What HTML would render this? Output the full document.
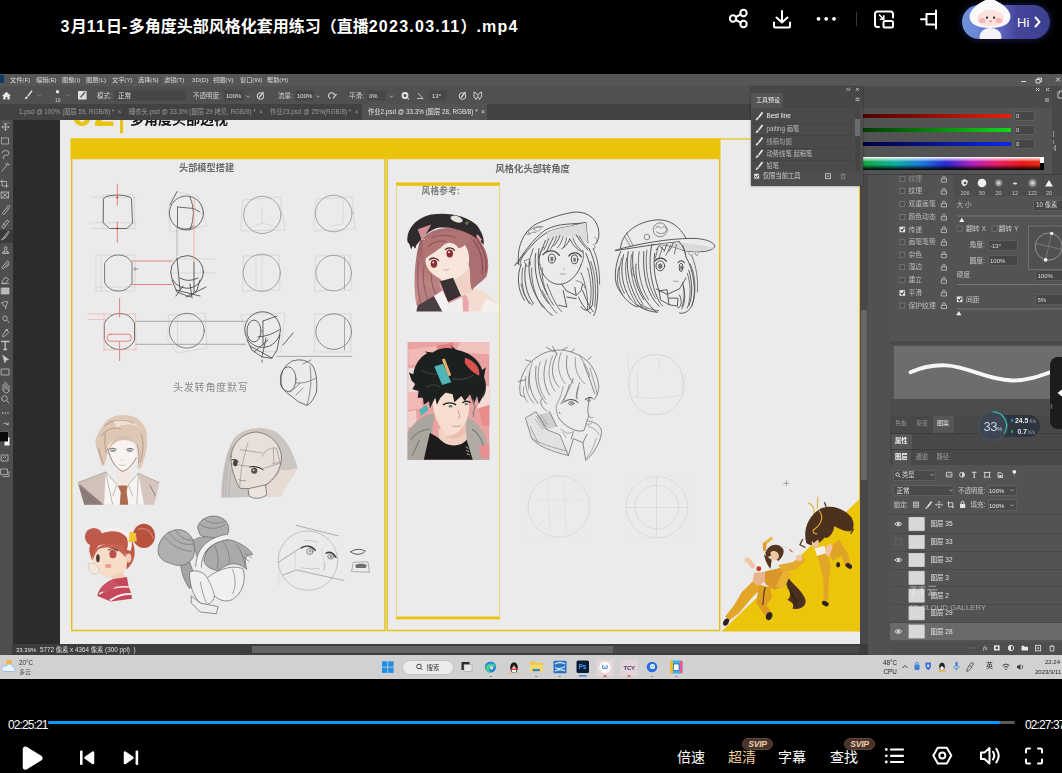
<!DOCTYPE html>
<html lang="zh-CN">
<head>
<meta charset="utf-8">
<title>3月11日-多角度头部风格化套用练习（直播2023.03.11）.mp4</title>
<style>
*{box-sizing:border-box;margin:0;padding:0}
html,body{width:1062px;height:773px;overflow:hidden;background:#000}
body{font-family:"Liberation Sans","Noto Sans CJK SC",sans-serif;color:#fff;position:relative}
.abs{position:absolute}
#title{left:60.500px;top:14.500px;font-size:16px;font-weight:bold;line-height:24px;white-space:nowrap;color:#fff;letter-spacing:0}
#video{left:0;top:73px;width:1062px;height:606px;overflow:hidden;background:#535353}
.t{position:absolute;white-space:nowrap;line-height:1}
/* bottom controls */
.ctl{position:absolute;font-size:14px;line-height:16px;color:#fff;white-space:nowrap}
.svip{position:absolute;height:12px;width:31px;border-radius:6px;background:#4a342a;color:#ecd0ae;font-size:8.500px;line-height:12px;font-weight:bold;font-style:italic;text-align:center;letter-spacing:-0.2px;border:1px solid #5d463a;line-height:10px}
#title .l{letter-spacing:1.25px}

#video{left:0;top:0;width:1062px;height:773px;background:none;filter:blur(.45px)}
#vbg{left:0;top:74px;width:1062px;height:605px;background:#535353}
.m{position:absolute;top:75.800px;font-size:6.200px;line-height:8px;color:#dcdcdc;white-space:nowrap}
.o{position:absolute;font-size:6.500px;line-height:8px;color:#d0d0d0;white-space:nowrap}
.box{position:absolute;background:#464646;border:1px solid #4a4a4a;border-radius:1px}
.tab{position:absolute;top:108px;font-size:6.300px;line-height:8px;color:#9a9a9a;white-space:nowrap}
.p{position:absolute;font-size:6.500px;line-height:8px;color:#cfcfcf;white-space:nowrap}
</style>
</head>
<body>
<!-- ===== top bar ===== -->
<div id="title" class="abs"><span class="l">3</span>月<span class="l">11</span>日<span class="l">-</span>多角度头部风格化套用练习（直播<span class="l">2023.03.11</span>）<span class="l">.mp4</span></div>
<svg class="abs" style="left:720px;top:0" width="342" height="50" viewBox="720 0 342 50" fill="none" stroke="#fff" stroke-width="2" stroke-linecap="round" stroke-linejoin="round">
  <!-- share -->
  <circle cx="733" cy="18.5" r="3.2"/><circle cx="743.5" cy="13" r="3.2"/><circle cx="743.5" cy="24" r="3.2"/>
  <path d="M735.8 17l5-2.6M735.8 20l5 2.6"/>
  <!-- download -->
  <path d="M782 11v11M776.5 17.5l5.5 5 5.500-5M774 22.500v3.500q0 1.500 1.500 1.500h13q1.500 0 1.500-1.500v-3.500"/>
  <!-- dots -->
  <g fill="#fff" stroke="none"><circle cx="818.500" cy="18.800" r="1.900"/><circle cx="826.200" cy="18.800" r="1.900"/><circle cx="834" cy="18.800" r="1.900"/></g>
  <path d="M856.500 12v14" stroke="#3a3a3a" stroke-width="1"/>
  <!-- pip -->
  <path d="M879 27h-1.500q-2.500 0-2.500-2.500v-10.500q0-2.500 2.500-2.500h13q2.500 0 2.500 2.500v3.500"/>
  <rect x="883.500" y="21" width="9.500" height="6.500" rx="1.500"/>
  <path d="M879.500 15l4 4M883.800 15.800v3.400h-3.400" stroke-width="1.600"/>
  <!-- pin -->
  <path d="M936 10.500v18M936 14h-9.500v10.500h9.500M926.500 19.300h-5.500"/>
</svg>
<!-- Hi pill -->
<div class="abs" style="left:962px;top:5px;width:88px;height:34px;border-radius:17px;background:linear-gradient(90deg,#6f93db 0%,#6677cf 35%,#45459a 62%,#3c3f8f 100%);box-shadow:0 0 6px 1px rgba(40,50,120,.55)"></div>
<svg class="abs" style="left:962px;top:0" width="60" height="40" viewBox="962 0 60 40">
  <defs><clipPath id="pillclip"><rect x="962" y="-10" width="88" height="49" rx="17"/></clipPath></defs>
  <g clip-path="url(#pillclip)">
  <ellipse cx="990.500" cy="36.500" rx="11" ry="8.500" fill="#f4f4f8"/>
  <path d="M990 -3c2 2.500 8 4 13 8c5 4 7.500 8 7.500 11.500c0 8-9 11.500-20.500 11.500s-20.500-3.500-20.500-11.500c0-3.500 2.500-7.500 7.500-11.500c5-4 11-5.500 13-8z" fill="#fbfbfd"/>
  <ellipse cx="990.500" cy="18.300" rx="13.500" ry="8.300" fill="#fde3df"/>
  <ellipse cx="982" cy="20.500" rx="3.500" ry="2.600" fill="#f9b4b4"/><ellipse cx="999" cy="20.500" rx="3.500" ry="2.600" fill="#f9b4b4"/>
  <circle cx="987" cy="17.700" r="1.100" fill="#2a1a1a"/><circle cx="994" cy="17.700" r="1.100" fill="#2a1a1a"/>
  <path d="M989.300 21q1.200 1.300 2.400 0" stroke="#c0392b" stroke-width=".8" fill="none"/>
  </g>
</svg>
<div class="t" style="left:1017px;top:16px;font-size:13px;color:#fff">Hi</div>
<svg class="abs" style="left:1033px;top:16px" width="10" height="12" viewBox="0 0 10 12" fill="none" stroke="#fff" stroke-width="1.900" stroke-linecap="round" stroke-linejoin="round"><path d="M2.500 1.500l4 4.500-4 4.500"/></svg>

<!-- ===== video frame ===== -->
<div id="video" class="abs">

<div id="vbg" class="abs"></div>
<!-- menu bar -->
<div class="abs" style="left:0;top:74px;width:1062px;height:12px;background:#565656"></div>
<div class="abs" style="left:0;top:75.300px;width:3.500px;height:7.700px;background:#0d3b66"></div>
<div class="m" style="left:10px">文件(F)</div><div class="m" style="left:36px">编辑(E)</div><div class="m" style="left:62px">图像(I)</div><div class="m" style="left:86px">图层(L)</div><div class="m" style="left:112px">文字(Y)</div><div class="m" style="left:138px">选择(S)</div><div class="m" style="left:164px">滤镜(T)</div><div class="m" style="left:192px">3D(D)</div><div class="m" style="left:213px">视图(V)</div><div class="m" style="left:240px">窗口(W)</div><div class="m" style="left:267px">帮助(H)</div>
<svg class="abs" style="left:1015px;top:74px" width="47" height="12" viewBox="1015 74 47 12" fill="none" stroke="#d8d8d8" stroke-width="1"><path d="M1021 81.500h5M1036 79.500h4v3.500h-4zM1037.500 79.500v-1.500h4v3.500h-1.500M1056 77.500l4 4M1060 77.500l-4 4"/></svg>
<!-- options bar -->
<div class="abs" style="left:0;top:86px;width:1062px;height:18px;background:#505050"></div>
<svg class="abs" style="left:0;top:86px" width="500" height="18" viewBox="0 86 500 18" fill="#e6e6e6" stroke="none">
  <path d="M2 96l4.500-4.300 4.500 4.300h-1.300v3.500h-2.300v-2.500h-1.800v2.500h-2.300v-3.500z"/>
  <path d="M31.500 90.200l-4 5.200 1 1 4-5.200zM27 96.200q-1.800.4-2.200 3 2.600-.2 3.200-2z"/>
  <path d="M37.500 94.500l1.800 1.800 1.800-1.800" fill="none" stroke="#888" stroke-width=".9"/>
  <circle cx="57.500" cy="91.700" r="1.700"/>
  <path d="M66.500 94.500l1.800 1.800 1.800-1.800" fill="none" stroke="#888" stroke-width=".9"/>
  <rect x="78" y="91" width="8.500" height="8.500" fill="#e0e0e0"/><path d="M85 92l-4.500 5.500" stroke="#505050" stroke-width="1.200"/>
  <path d="M180.500 95.500l1.800 1.800 1.800-1.800M246.500 95.500l1.800 1.800 1.800-1.800M316.500 95.500l1.800 1.800 1.800-1.800M389.500 95.500l1.800 1.800 1.800-1.800" fill="none" stroke="#aaa" stroke-width=".9"/>
  <circle cx="260.500" cy="96" r="3.300" fill="none" stroke="#ddd" stroke-width="1"/><path d="M259 97.500l4.500-5.500" stroke="#ddd" stroke-width="1.200"/>
  <path d="M330.500 98.500a3 3 0 1 1 4-3.500M333 98.300l3.500-4.300" fill="none" stroke="#ddd" stroke-width="1.100"/>
  <circle cx="405" cy="95.500" r="2.500" fill="none" stroke="#e6e6e6" stroke-width="1.800"/><circle cx="408.300" cy="98.800" r=".8"/>
  <path d="M417 98.500h6l-5-5.500" fill="none" stroke="#ccc" stroke-width=".9"/>
  <circle cx="462.500" cy="96" r="3.300" fill="none" stroke="#ddd" stroke-width="1"/><path d="M461 97.500l4.500-5.500" stroke="#ddd" stroke-width="1.200"/>
  <path d="M474 92q2 0 3.800 3.500 1.800-3.500 3.800-3.500v5q-1.300.2-2 2.500l-1.800-3-1.800 3q-.7-2.300-2-2.500z" fill="none" stroke="#ddd" stroke-width=".9"/>
</svg>
<div class="o" style="left:55px;top:97px;font-size:5px;line-height:6px;color:#ccc">10</div>
<div class="o" style="left:97px;top:92px">模式:</div>
<div class="box" style="left:114px;top:90px;width:72px;height:11px"></div><div class="o" style="left:118px;top:92px;color:#e2e2e2">正常</div>
<div class="o" style="left:193px;top:92px">不透明度:</div>
<div class="box" style="left:224px;top:90px;width:20px;height:11px"></div><div class="o" style="left:226px;top:92px;font-size:6px;color:#e2e2e2">100%</div>
<div class="o" style="left:278px;top:92px">流量:</div>
<div class="box" style="left:295px;top:90px;width:19px;height:11px"></div><div class="o" style="left:297px;top:92px;font-size:6px;color:#e2e2e2">100%</div>
<div class="o" style="left:349px;top:92px">平滑:</div>
<div class="box" style="left:367px;top:90px;width:19px;height:11px"></div><div class="o" style="left:369px;top:92px;font-size:6px;color:#e2e2e2">0%</div>
<div class="box" style="left:429px;top:90px;width:18px;height:11px"></div><div class="o" style="left:432px;top:92px;font-size:6px;color:#e2e2e2">13°</div>
<!-- tab bar -->
<div class="abs" style="left:0;top:104px;width:868px;height:16px;background:#424242"></div>
<div class="abs" style="left:362px;top:104px;width:125px;height:16px;background:#535353"></div>
<div class="tab" style="left:19px">1.psd @ 100% (图层 59, RGB/8) * &nbsp;×</div>
<div class="tab" style="left:129px">睡衣头.psd @ 33.3% (图层 29 拷贝, RGB/8) * &nbsp;×</div>
<div class="tab" style="left:270px">作业23.psd @ 25%(RGB/8) * &nbsp;×</div>
<div class="tab" style="left:368px;color:#e6e6e6">作业2.psd @ 33.3% (图层 28, RGB/8) * &nbsp;×</div>
<!-- canvas area -->
<div class="abs" style="left:12px;top:120px;width:848px;height:524px;background:#2c2c2c"></div>
<svg class="abs" style="left:60px;top:120px" width="800" height="524" viewBox="60 120 800 524" font-family="'Liberation Sans','Noto Sans CJK SC',sans-serif">
<defs>
  <linearGradient id="hairg1" x1="0" y1="0" x2="0" y2="1"><stop offset="0" stop-color="#9a5e61"/><stop offset="1" stop-color="#cd9893"/></linearGradient>
  <filter id="soft" x="-5%" y="-5%" width="110%" height="110%"><feGaussianBlur stdDeviation="0.35"/></filter>
</defs>
<rect x="60" y="120" width="800" height="524" fill="#ebebeb"/>
<!-- header -->
<text x="71.500" y="125.600" font-size="38" font-weight="bold" fill="#ecc30c" letter-spacing="1">02</text>
<rect x="120" y="118" width="3.100" height="15.300" fill="#ecc30c"/>
<text x="130" y="124.300" font-size="14" font-weight="bold" fill="#111">多角度头部透视</text>
<!-- yellow banner + frames -->
<rect x="70.500" y="138.200" width="650" height="21" fill="#ebc30a"/>
<path d="M720 139h31" stroke="#e8c20e" stroke-width="1.200"/>
<g fill="none" stroke="#e6bf14" stroke-width="1.400">
  <path d="M71.700 159v471.500h313.300V159"/>
  <path d="M387.200 159v471.500h332.500V159"/>
</g>
<!-- reference box -->
<rect x="396" y="182.500" width="104" height="3.300" fill="#ebc30a"/>
<rect x="396" y="616.500" width="104" height="2.800" fill="#ebc30a"/>
<path d="M396.500 185v432M499.500 185v432" stroke="#e9d98a" stroke-width="1" fill="none"/>
<!-- bottom right triangle -->
<path d="M860 498.500V631.500H721.500z" fill="#ecc40a"/>
<path d="M859.500 120v512" stroke="#e8c62a" stroke-width="1"/>
<!-- labels -->
<text x="179" y="171.200" font-size="9.200" font-weight="bold" fill="#6b6b6b">头部模型搭建</text>
<text x="495.500" y="171.800" font-size="9.300" font-weight="bold" fill="#666">风格化头部转角度</text>
<text x="421.500" y="193.900" font-size="8.600" font-weight="bold" fill="#7a7a7a" letter-spacing=".3">风格参考:</text>
<text x="173" y="391.300" font-size="10" fill="#8a8a8a" letter-spacing=".8">头发转角度默写</text>
<!-- ===== head models ===== -->
<g fill="none" stroke-linecap="round" stroke-linejoin="round">
 <g stroke="#cdcdcd" stroke-width=".6">
  <path d="M92 197.300H136M90 222.800H136M92 228.500H134M103 195V229M134 195L135 229M103 195H134"/>
  <path d="M177 192L198 196 207 226 170 232 168 205Z"/>
  <path d="M96.300 255H135V291H96.300ZM101 255V291M96 287H135"/>
  <path d="M172 259H215M172 273H215"/>
  <path d="M243 200L280 197 285 230 241 231ZM316 199L352 197 355 229 314 231Z"/>
  <path d="M244 256L279 255 280 290 243 291ZM316 256L350 255 352 290 315 291ZM262 255V291M256 258V288"/>
  <path d="M169 315L205 313 207 348 177 353 168 340ZM177.500 318V348"/>
  <path d="M241 315L285 313 281 352 252 351ZM315 314H351V352H315Z"/>
  <path d="M262 208V223L250 228M262 223L277 227M343 200V224L330 226"/>
 </g>
 <g stroke="#6a6a6a" stroke-width=".85">
  <path d="M103.500 199Q104 196.500 110 195.700 117.500 194.300 125 195.700 131 196.800 131.500 199L132.500 223 127 228.500H109.500L103.500 223Z" stroke="#555"/>
  <circle cx="186.400" cy="213" r="17" stroke="#555"/>
  <path d="M177.500 207V227M177.500 207L194 208.500 200 212M177.500 227Q186 232 194 226M190 197Q197 213 190 230M177 191.500L170 205" stroke="#555"/>
  <path d="M177 225V256" stroke="#999" stroke-width=".6"/>
  <path d="M104.800 263A15.500 15.500 0 0 1 132 263V283A15.500 15.500 0 0 1 104.800 283Z" stroke="#666"/>
  <circle cx="187" cy="272" r="16.300" stroke="#444"/>
  <path d="M172 280L177 292 190 297 197 290 200 280M177 258L180 290M194 262V292M176 290L200 296M186 297L206 287M180 278Q188 283 198 278M183 286L176 296M190 284L192 298" stroke="#444"/>
  <circle cx="262.300" cy="214.900" r="18.600" stroke="#979797"/>
  <circle cx="333.700" cy="213.500" r="18.300" stroke="#979797"/>
  <circle cx="261.800" cy="272.800" r="18.600" stroke="#979797"/>
  <circle cx="333.700" cy="273.100" r="17.800" stroke="#979797"/>
  <path d="M344.500 257V289" stroke="#999" stroke-width=".7"/>
  <path d="M104.500 323A16.500 16.500 0 0 1 134.500 323V340A16.500 16.500 0 0 1 104.500 340Z" stroke="#555"/>
  <path d="M135.900 321.300H245.500M135.900 344.300H245.500M276.600 356.400H351.800" stroke="#8c8c8c" stroke-width=".7"/>
  <circle cx="186.800" cy="330.700" r="17.400" stroke="#707070"/>
  <circle cx="262.600" cy="329.600" r="17.800" stroke="#4a4a4a"/>
  <path d="M247 340L252 350 262 357 271.900 358.300 277 350 280 335M258 337Q270 336 279 330M263 321V345M263 321L277 316M262 357L266 338M250 346L272 358M254 352L268 340M283 345L293 333M262 360V362" stroke="#4a4a4a"/>
  <ellipse cx="254" cy="331" rx="7" ry="11" stroke="#4a4a4a"/>
  <circle cx="333.700" cy="331.600" r="17.800" stroke="#7a7a7a"/>
  <path d="M344.500 318V350" stroke="#888" stroke-width=".7"/>
  <path d="M281 385Q279 368 292 361 305 357 313 366 318 376 316.500 392 313 402 307 405.500 298 403 290 395 282 390 281 385Z" stroke="#555"/>
  <ellipse cx="288.200" cy="379.200" rx="7.800" ry="12.400" stroke="#555"/>
  <path d="M296 383Q306 384 316 378M310 366Q313 385 307 405M290 392Q298 386 300 383M303 364L311 360M296 395L303 388" stroke="#666" stroke-width=".7"/>
 </g>
 <g stroke="#e2564a" stroke-width=".7">
  <path d="M117.300 184.300V205M117.300 222V242.500M132 261H172M132 284.500H172"/><path d="M194 200V262" stroke="#ee938a" stroke-width=".6"/>
  <path d="M119.600 298.500V317M119.600 342V360.600"/>
  <rect x="107.200" y="334.200" width="24" height="7" rx="3"/>
  <path d="M88 314H134M88 319.500H105M104 349.700H136M104 314V350M135.500 314L136 350" stroke="#f0a8a0" stroke-width=".6"/>
 </g>
 <circle cx="117.300" cy="197.500" r=".9" fill="#b02a20" stroke="none"/><circle cx="117.300" cy="228.500" r=".9" fill="#b02a20" stroke="none"/>
 <path d="M134 269h4M135.500 267.500l-1.500 1.500 1.500 1.500" stroke="#666" stroke-width=".6"/>
</g>
<!-- ===== portrait 1 (girl with cap) ===== -->
<g transform="translate(395,180) scale(0.18123)">
 <path d="M70 725L100 680 200 640 330 660 560 690 575 725Z" fill="#f1efee"/>
 <path d="M400 600C460 585 540 640 560 690L520 725 380 725Z" fill="#f4ddd0"/>
 <path d="M500 660C540 660 570 690 575 725L470 725Z" fill="#f3f1f0"/>
 <path d="M140 330C105 430 100 600 118 692L200 690C250 650 275 600 262 560L180 470 175 330Z" fill="url(#hairg1)"/>
 <path d="M330 520L410 480 428 612 372 642 320 548Z" fill="#f1d3c5"/>
 <path d="M145 330C200 260 320 240 430 300 508 360 528 450 506 530 480 565 450 575 425 610 408 560 420 520 410 480L330 300Z" fill="#ab6f71"/>
 <path d="M430 330C470 380 490 450 480 520M455 330C495 390 510 450 500 510" stroke="#8a4f55" stroke-width="7" fill="none"/>
 <path d="M170 425C185 350 262 312 338 318 405 345 425 430 396 498 358 548 300 558 252 546 196 518 160 480 170 425Z" fill="#f8e6da"/>
 <path d="M150 340C220 280 330 270 425 300 410 335 390 368 352 378 332 346 300 336 272 356 242 386 202 406 160 440Z" fill="#b27576"/>
 <path d="M200 320C240 300 300 300 340 320M180 370C210 340 250 330 280 340" stroke="#8f5559" stroke-width="6" fill="none"/>
 <path d="M120 690L150 560 200 600 250 560 262 640 200 700Z" fill="#b98083"/>
 <path d="M130 450C120 520 125 600 140 680M160 470C150 540 160 610 185 670M200 520C200 580 215 620 240 640" stroke="#96595e" stroke-width="6" fill="none"/>
 <ellipse cx="215" cy="462" rx="18" ry="22" fill="#8c2e34"/><ellipse cx="302" cy="405" rx="18" ry="22" fill="#8c2e34"/>
 <circle cx="211" cy="455" r="5" fill="#fff"/><circle cx="298" cy="398" r="5" fill="#fff"/>
 <path d="M188 442C203 425 230 427 242 446M276 386C291 369 319 371 330 390" stroke="#4a2a2c" stroke-width="7" fill="none"/>
 <path d="M268 492C278 500 290 498 298 490" stroke="#c98a80" stroke-width="4" fill="none"/>
 <path d="M70 345C58 280 110 210 200 190 300 175 400 200 452 250 482 290 494 330 489 357 440 300 330 250 230 265 170 290 140 330 110 372Z" fill="#2f2a2d"/>
 <path d="M78 340L90 372 100 345 112 375" stroke="#2f2a2d" stroke-width="8" fill="none"/>
 <path d="M125 272L200 246 150 336Z" fill="#cf8f95"/>
 <path d="M455 300L480 330 470 340 448 312Z" fill="#e6a4aa"/>
 <ellipse cx="340" cy="216" rx="35" ry="17" fill="#e8e2da" transform="rotate(18 340 216)"/>
 <circle cx="396" cy="238" r="9" fill="#3c8a5a"/><circle cx="404" cy="232" r="5" fill="#c8382c"/>
 <path d="M245 560L320 540 365 640 290 676Z" fill="#3a3134"/>
 <path d="M245 565L290 680 372 640" stroke="#e79aa0" stroke-width="9" fill="none"/>
 <path d="M125 692L215 640 262 725 118 725Z" fill="#4a4044"/>
 <path d="M215 640L262 610 300 690 262 725Z" fill="#f4f2f1"/>
 <path d="M372 640C400 620 410 660 405 725L375 725Z" fill="#e9a7ab"/>
</g>
<!-- ===== portrait 2 (boy) ===== -->
<g transform="translate(395,335) scale(0.17461)">
 <rect x="72" y="40" width="468" height="675" fill="#e9a2a1"/>
 <path d="M75 85L235 65 240 150 78 175Z" fill="#f0b9b5"/><path d="M370 42L540 42 540 110 350 100Z" fill="#f2c2be"/>
 <path d="M500 300L540 290 540 440 470 420Z" fill="#f3dcd8"/><path d="M75 190L130 185 135 380 75 385Z" fill="#ead8d4"/>
 <path d="M75 330L150 320 155 420 75 430Z" fill="#f1bab6"/><path d="M480 420L540 400 540 520 500 520Z" fill="#e88c8c"/>
 <path d="M240 60L330 45 335 75 245 90Z" fill="#e07f80"/><path d="M75 440L120 430 125 520 75 530Z" fill="#f4cfca"/>
 <path d="M72 560C110 490 180 445 228 452L210 560 165 715 72 715Z" fill="#aaa59d"/>
 <path d="M410 470C480 500 540 580 540 715L440 715 400 600Z" fill="#b0aba3"/>
 <path d="M90 600C120 560 160 540 200 540M440 540C480 560 510 620 520 690M100 690L140 600" stroke="#7d7871" stroke-width="6" fill="none"/>
 <path d="M250 540L400 480 412 620 300 642 250 600Z" fill="#f2d1c3"/>
 <path d="M215 370C230 340 300 320 400 340 437 380 430 450 400 510 370 560 330 586 295 575 250 530 215 450 215 370Z" fill="#f7ddd0"/>
 <path d="M290 575C330 585 372 556 400 510L405 560C370 600 320 610 290 575Z" fill="#e9bfae"/>
 <path d="M165 715L200 560 250 590C300 650 380 640 410 600L445 715Z" fill="#1d1b1c"/>
 <path d="M95 260L80 215 105 225C110 170 150 120 185 105L170 95 215 100C250 75 300 70 330 78L320 60 350 85C420 95 480 140 500 200L520 185 510 240C530 290 520 340 500 365L515 330 480 395 470 350 450 400 430 340 400 380 380 350 340 385 330 340 290 330 260 360 240 400 230 360 200 420 195 380 165 400 160 360 130 360 135 320 100 310 115 280Z" fill="#1c2120"/>
 <path d="M150 200C200 230 260 230 300 215M330 250C380 260 420 250 450 230M180 300C200 280 240 280 260 300" stroke="#3c4644" stroke-width="6" fill="none"/>
 <path d="M225 180L275 165 322 270 270 286Z" fill="#4fb5b8"/><path d="M268 140L285 135 322 230 306 236Z" fill="#e8b070"/>
 <path d="M138 430L180 400 192 430 150 462Z" fill="#4fb5b8"/>
 <path d="M400 130C440 140 492 180 482 232 450 220 420 190 400 160Z" fill="#d9534f"/>
 <path d="M275 400C295 385 330 385 350 400M385 388C400 378 420 378 432 388" stroke="#1e1e1e" stroke-width="8" fill="none"/>
 <ellipse cx="318" cy="408" rx="12" ry="7" fill="#5f7f78"/><ellipse cx="408" cy="396" rx="10" ry="6" fill="#5f7f78"/>
 <path d="M360 430L372 470 358 478M330 520C345 528 365 526 378 518" stroke="#c49a8c" stroke-width="5" fill="none"/>
 <path d="M445 370L458 410 446 450M452 440L448 470" stroke="#8a8580" stroke-width="7" fill="none"/>
 <path d="M480 640L540 620 540 700 500 712Z" fill="#e98f8f"/>
 <path d="M405 640L420 650M408 660L424 668M412 680L428 686" stroke="#d8d0c0" stroke-width="5"/>
</g>
<!-- ===== man with tie ===== -->
<g transform="translate(70,405) scale(0.14235)">
 <path d="M55 545L250 470 300 700 100 700Z" fill="#d0c1b9"/><path d="M480 480L628 545 592 700 470 700Z" fill="#d5c7bf"/>
 <path d="M58 555L235 700 100 700Z" fill="#8d7d79"/>
 <path d="M250 480L330 560 410 560 480 480 520 700 240 700Z" fill="#f6f5f4"/>
 <path d="M330 430L420 430 425 530 370 570 325 530Z" fill="#f1e6e0"/>
 <path d="M335 565L405 565 398 612 410 700 350 700 356 612Z" fill="#b06a50"/>
 <path d="M180 280C170 230 210 180 240 130 280 70 380 55 450 85 520 115 545 180 540 240 548 300 522 380 500 442 480 456 468 440 475 420 490 360 480 300 450 260 400 230 350 200 320 230 290 250 270 290 262 340 255 380 250 420 225 432 215 400 200 340 180 280Z" fill="#dec7b5"/>
 <path d="M300 110C360 80 440 100 490 160 440 130 380 130 330 160Z" fill="#eddfd3"/>
 <path d="M265 300C290 240 340 220 400 240 452 270 472 320 466 370 440 420 400 460 370 466 330 450 285 400 265 300Z" fill="#f8f3f0"/>
 <path d="M320 230C360 200 420 215 460 270 430 250 390 240 350 250 310 262 285 290 268 330 275 290 295 250 320 230Z" fill="#d8bfac"/>
 <path d="M240 150C290 100 380 90 450 130M220 220C250 170 310 150 360 170M500 200C520 260 515 330 495 400M200 300C210 350 225 390 235 415M470 280C485 320 488 370 480 410M250 200C240 250 245 300 255 340" stroke="#b3917c" stroke-width="6" fill="none"/>
 <ellipse cx="302" cy="322" rx="20" ry="9" fill="#8aa0a6"/><ellipse cx="420" cy="322" rx="20" ry="9" fill="#8aa0a6"/>
 <path d="M275 312C292 300 318 302 328 315M395 315C408 302 435 302 448 315" stroke="#5e4e48" stroke-width="6" fill="none"/>
 <path d="M265 300C285 400 330 450 370 466 400 460 440 420 466 370" stroke="#7a5a50" stroke-width="5" fill="none"/>
 <path d="M345 420C360 426 378 426 392 420M362 380L368 392" stroke="#b89a90" stroke-width="4" fill="none"/>
 <path d="M250 470L330 560 300 640M480 480L410 560 440 640M55 545L250 470M480 480L628 545M250 470L300 700M480 480L470 700" stroke="#9b8b84" stroke-width="4" fill="none"/>
 <path d="M70 560L220 690M80 600L180 690M560 560L600 640" stroke="#7a6a66" stroke-width="5" fill="none"/>
</g>
<!-- ===== girl sketch grey hair ===== -->
<g transform="translate(215,420) scale(0.11)">
 <path d="M55 710C60 500 90 300 170 170 250 70 420 40 560 110 680 200 740 380 750 440 700 520 640 600 600 690L460 700 310 700Z" fill="#ccc6c2"/>
 <path d="M600 450C680 470 740 430 750 440 700 520 640 600 600 690L460 700 465 600C520 560 570 510 600 450Z" fill="#e7dbd4"/>
 <path d="M145 330C160 200 260 110 380 110 500 120 600 220 605 340 600 450 540 540 460 590L300 625 225 620C180 540 140 430 145 330Z" fill="#e8dfd9"/>
 <path d="M300 625L460 590 470 680C420 720 350 720 310 690Z" fill="#ece4de"/>
 <g fill="none" stroke="#4e4848" stroke-width="5.500" stroke-linecap="round" stroke-linejoin="round">
  <path d="M145 330C160 200 260 110 380 110 500 120 600 220 605 340 600 450 540 540 460 590L300 625 225 620C180 540 140 430 145 330Z"/>
  <path d="M300 210C270 300 250 400 240 440L225 600M150 400L440 440 600 390M230 270L430 300M430 330C450 270 520 240 560 260L590 380 520 400M530 260L536 390" stroke="#6a6262" stroke-width="4"/>
  <path d="M300 625L310 690C350 720 420 720 470 680L460 590"/>
  <path d="M215 540C235 555 260 555 280 548" stroke-width="4"/>
 </g>
 <path d="M100 700C90 520 120 330 170 230M75 700C75 520 100 340 150 240M130 700C125 600 135 500 150 440" stroke="#a9a3a0" stroke-width="5" fill="none"/>
 <ellipse cx="185" cy="392" rx="20" ry="30" fill="#4a4040"/><ellipse cx="357" cy="462" rx="28" ry="27" fill="#5a4e4c"/>
 <circle cx="352" cy="456" r="9" fill="#d8cfc8"/>
 <path d="M150 365C170 352 200 360 215 385M315 430C340 415 400 425 440 455" stroke="#2a2424" stroke-width="9" fill="none"/>
</g>
<!-- ===== red hair girl + grey buns ===== -->
<g transform="translate(75,510) scale(0.17891)">
 <ellipse cx="105" cy="150" rx="50" ry="50" fill="#bd5a4c"/>
 <ellipse cx="385" cy="145" rx="62" ry="68" fill="#b8523f"/>
 <path d="M350 110C390 90 430 120 435 160" stroke="#d07a66" stroke-width="8" fill="none"/>
 <path d="M80 230C80 150 160 110 240 120 310 130 342 190 332 260 322 300 300 320 290 332L280 260C250 200 180 180 130 200 110 230 100 260 95 282Z" fill="#c05a48"/>
 <path d="M100 260C110 200 180 180 250 200 290 230 300 290 282 330 260 370 210 386 170 376 130 350 95 310 100 260Z" fill="#f7dcc8"/>
 <path d="M200 370L270 340 286 400 215 412Z" fill="#f3d2bd"/>
 <path d="M100 250C120 190 200 170 270 200 280 230 285 250 282 265 250 215 180 195 130 220 115 240 105 262 98 285Z" fill="#c56250"/>
 <path d="M165 115C210 95 270 110 300 150 310 180 306 210 300 226" stroke="#f4f0ee" stroke-width="22" fill="none"/>
 <path d="M305 120L340 130 346 175 300 180Z" fill="#f2c436"/>
 <ellipse cx="300" cy="268" rx="15" ry="25" fill="#f3cdb5"/>
 <ellipse cx="212" cy="246" rx="20" ry="24" fill="#b8524a"/><ellipse cx="128" cy="270" rx="10" ry="22" fill="#4a3a38"/>
 <path d="M185 225C200 212 228 214 240 230" stroke="#5a3030" stroke-width="6" fill="none"/>
 <ellipse cx="186" cy="313" rx="18" ry="12" fill="#f0a090"/>
 <path d="M75 300C90 290 120 300 135 330 140 350 120 366 100 356 80 345 70 320 75 300Z" fill="#f3e6da" stroke="#c8b4a4" stroke-width="3"/>
 <path d="M125 480C130 440 170 400 215 385L290 375 300 430C310 450 320 480 318 496L200 512Z" fill="#c4485a"/>
 <path d="M135 470C180 440 240 425 300 430" stroke="#f4ecec" stroke-width="9" fill="none"/><path d="M195 505C230 480 280 465 316 470" stroke="#f4ecec" stroke-width="11" fill="none"/>
 <path d="M140 440L215 385 240 420 170 470Z" fill="#cd5266"/>
 <!-- grey buns -->
 <path d="M590 300L640 290 662 350 642 440C610 400 595 350 590 300Z" fill="#a5a5a5" stroke="#666" stroke-width="4"/>
 <path d="M465 220C470 150 530 105 590 110 650 120 682 190 662 260 640 310 580 320 540 300 490 290 460 260 465 220Z" fill="#b0b0b0" stroke="#666" stroke-width="4"/>
 <path d="M685 100C690 50 760 20 810 40 860 60 870 110 850 140 800 160 730 160 700 140Z" fill="#adadad" stroke="#666" stroke-width="4"/>
 <path d="M660 170C700 140 760 150 790 160L740 230 680 260Z" fill="#a8a8a8" stroke="#666" stroke-width="3"/>
 <path d="M720 280C730 210 800 150 880 170 940 190 990 230 992 250 960 250 940 260 960 332 900 280 850 300 800 340 760 330 730 320 720 280Z" fill="#aaaaaa" stroke="#666" stroke-width="4"/>
 <path d="M690 320C690 230 740 170 850 150" stroke="#f2f2f2" stroke-width="28" fill="none"/>
 <path d="M675 318C676 224 732 158 846 136M706 322C706 240 752 184 856 166" stroke="#666" stroke-width="4" fill="none"/>
 <path d="M640 350C660 330 720 340 740 380 780 340 880 300 940 330 960 400 930 470 880 500 840 520 800 500 780 480 770 520 740 540 700 520 660 480 640 420 640 350Z" fill="#f0f0f0" stroke="#666" stroke-width="4"/>
 <path d="M650 480L700 520 800 540 790 580 700 570 650 520Z" fill="#ededed" stroke="#666" stroke-width="4"/>
 <path d="M500 150C540 200 600 230 655 230M520 120C560 180 610 200 660 190M560 110C590 160 630 175 665 165M700 80C740 110 800 110 840 80M720 50C760 80 810 80 845 60M780 200C800 240 805 280 795 330M830 180C860 230 870 270 860 300M900 190C930 230 945 270 950 310M740 380C760 420 775 450 780 480M700 400C710 450 720 490 735 520M930 250L975 290M950 240L990 270M880 330C900 380 900 430 880 470" stroke="#6e6e6e" stroke-width="3.500" fill="none"/>
</g>
<g transform="translate(270,515) scale(0.11)" fill="none" stroke-linecap="round" stroke-linejoin="round">
 <circle cx="345" cy="415" r="270" stroke="#bdbdbd" stroke-width="8"/>
 <path d="M240 95L620 190M75 430L290 290M120 545L240 500 670 595" stroke="#9a9a9a" stroke-width="7"/>
 <path d="M80 640V440M470 300L500 500M230 330V500" stroke="#d0d0d0" stroke-width="6"/>
 <path d="M310 235C350 225 400 232 430 250M290 480C340 490 400 490 450 485M500 430L490 500" stroke="#b5b5b5" stroke-width="6"/>
 <path d="M285 300C320 272 380 278 412 322M510 347C530 330 572 335 600 385" stroke="#3c3c3c" stroke-width="13"/>
 <ellipse cx="362" cy="332" rx="30" ry="27" stroke="#666" stroke-width="7"/><ellipse cx="552" cy="376" rx="27" ry="24" stroke="#666" stroke-width="7"/>
 <ellipse cx="365" cy="330" rx="13" ry="16" fill="#aaa" stroke="none"/><ellipse cx="555" cy="376" rx="12" ry="15" fill="#999" stroke="none"/>
 <path d="M735 335C770 305 830 305 866 330 830 366 770 366 735 335Z" stroke="#5a5a5a" stroke-width="9"/>
 <path d="M760 430L890 425 905 520 745 515Z" stroke="#9a9a9a" stroke-width="7"/>
 <path d="M775 455C800 440 850 440 880 455L870 482 780 482Z" fill="#6e6e6e" stroke="none"/>
</g>


<!-- ===== sketch girl 1 (cap, front) ===== -->
<g transform="translate(505,200) scale(0.16176)" fill="none" stroke="#555" stroke-width="6" stroke-linecap="round" stroke-linejoin="round">
 <path d="M85 400C70 300 110 190 200 145 280 112 330 92 420 76 500 66 560 110 575 170 586 215 580 250 560 272"/>
 <path d="M60 405C110 340 170 240 250 185 330 140 420 152 500 140"/>
 <path d="M75 395C130 320 190 240 262 200 330 165 400 170 420 158"/>
 <path d="M420 156L500 140 512 262Z" fill="#e2e2e2"/>
 <path d="M262 200C330 165 400 170 420 158L500 140 512 262C470 230 400 215 330 225 290 232 262 250 250 262Z" fill="#dcdcdc" stroke="none"/>
 <path d="M110 420C95 500 110 580 150 640M165 420C160 500 185 600 235 665M230 420C225 500 250 580 300 650M120 330C100 360 90 390 95 410M175 300C160 340 150 370 150 395M530 380C560 460 565 560 555 660M510 420C535 500 540 600 520 672M470 450C500 520 515 600 510 680M260 520C290 600 320 660 350 690M230 560C260 620 290 670 320 700M100 520C110 580 140 630 170 650M545 300C570 350 585 430 585 520" stroke-width="5"/>
 <path d="M270 240C260 270 250 290 240 310M320 225C310 255 295 285 280 305M360 225C352 255 340 280 325 295M420 235C430 270 450 295 470 310M460 225C480 260 500 290 520 300M380 232C378 260 370 280 360 295" stroke-width="5"/>
 <path d="M215 400C205 360 215 320 240 290M470 400C485 370 490 340 480 310" stroke-width="5"/>
 <path d="M140 195C170 170 210 160 235 165M150 215C160 200 180 195 190 200" stroke-width="4"/>
 <circle cx="140" cy="205" r="9" stroke-width="3"/><path d="M180 180C195 165 215 165 225 175 210 195 190 200 180 180Z" stroke-width="3"/>
 <path d="M555 230C575 240 575 262 558 270M545 275C560 282 560 298 548 302" stroke-width="4"/>
 <path d="M100 400C70 470 80 560 120 620M130 395C110 480 130 580 175 640M150 380C140 470 170 590 240 660 260 690 280 705 292 712M190 330C175 430 200 560 270 640M210 300C195 390 215 500 262 585"/>
 <path d="M520 300C560 380 580 500 572 600 568 660 560 700 548 715M500 330C540 420 555 540 540 650 520 690 490 690 470 660M480 560C500 610 520 660 545 690M455 600C470 640 500 680 530 700"/>
 <path d="M250 250C232 300 215 330 210 362M300 230C280 270 262 300 258 320M400 240C390 272 370 292 350 302M400 240C420 282 450 312 482 322M340 220C330 250 315 270 300 285M440 215C460 250 490 290 515 310"/>
 <path d="M215 400C225 450 250 490 290 510 320 525 350 525 380 510 420 490 455 450 470 400"/>
 <path d="M235 338C260 306 310 306 336 342M395 346C415 320 452 320 472 352" stroke-width="8" stroke="#444"/>
 <ellipse cx="290" cy="362" rx="22" ry="28" stroke="#444"/><ellipse cx="430" cy="367" rx="20" ry="27" stroke="#444"/>
 <ellipse cx="290" cy="365" rx="10" ry="15" fill="#777" stroke="none"/><ellipse cx="430" cy="370" rx="9" ry="14" fill="#777" stroke="none"/>
 <path d="M340 455C350 460 362 460 372 455M360 420L366 428" stroke-width="3"/>
 <path d="M120 375L150 365 160 400 135 410Z" stroke-width="4"/>
 <path d="M350 520L380 562 440 590 432 540M360 560L382 662 332 650M440 590L470 560 480 520M382 600L440 610" />
 <path d="M440 500C470 500 490 520 495 545" stroke-width="4"/>
</g>
<!-- ===== sketch girl 2 (cap, 3/4) ===== -->
<g transform="translate(605,205) scale(0.15524)" fill="none" stroke="#505050" stroke-width="6" stroke-linecap="round" stroke-linejoin="round">
 <path d="M100 278C108 180 200 110 330 96 420 90 482 140 522 215"/>
 <path d="M65 292C200 252 400 216 560 215 640 215 702 236 706 266 700 300 600 312 500 292"/>
 <path d="M70 294C200 272 330 252 480 236M500 292C440 262 360 250 300 256"/>
 <path d="M300 256C360 250 440 262 500 292 560 305 650 300 700 275 640 262 560 250 480 240Z" fill="#dadada" stroke="none"/>
 <path d="M110 340C80 420 85 500 125 570M140 340C120 430 140 540 200 630M170 320C155 420 180 540 245 640M220 300C205 400 225 520 280 610M270 290C255 400 275 520 325 600M90 400C70 470 80 530 115 580M230 640C270 665 310 680 345 680M160 600C190 640 230 660 270 670M550 380C585 460 590 570 560 650M530 440C555 510 555 600 530 665M505 520C520 580 515 640 495 670M560 330C590 400 600 480 595 560" stroke-width="5"/>
 <path d="M340 280C335 300 330 320 325 340M370 270C362 300 355 320 350 335M420 262C410 290 400 310 392 325M460 255C455 280 450 300 448 315M500 260C510 290 518 310 520 330" stroke-width="5"/>
 <path d="M125 200L165 268M140 180L180 262" stroke-width="4"/>
 <circle cx="355" cy="160" r="45" stroke-width="4"/><circle cx="270" cy="206" r="18" stroke-width="4"/>
 <path d="M325 150C335 135 350 135 358 148M365 148C375 135 392 138 395 152M330 172C350 190 380 188 392 170" stroke-width="4"/>
 <path d="M100 300C60 400 50 500 100 562 140 622 180 652 212 656M150 300C130 420 160 560 242 662M120 320C95 420 110 520 160 600M200 380C190 480 230 600 330 690M180 300C170 400 190 520 250 610M250 300C240 450 270 580 350 652M300 260C280 360 290 480 330 580 345 620 360 640 372 650M200 640C240 670 290 690 340 690"/>
 <path d="M320 310C310 400 320 480 352 560M330 540L400 576 480 540 522 470"/>
 <path d="M330 290L350 262 380 290M400 250L380 300M440 245C430 270 420 290 410 300M480 240C500 260 515 290 520 320"/>
 <path d="M322 360C340 335 378 335 395 362" stroke-width="8" stroke="#444"/><path d="M470 372C482 355 500 355 512 372" stroke-width="7" stroke="#444"/>
 <ellipse cx="356" cy="392" rx="28" ry="32" stroke="#444"/><ellipse cx="356" cy="395" rx="14" ry="18" fill="#777" stroke="none"/>
 <ellipse cx="490" cy="402" rx="12" ry="27" stroke="#444"/><ellipse cx="490" cy="405" rx="6" ry="15" fill="#777" stroke="none"/>
 <path d="M440 490L470 492" stroke-width="3"/>
 <path d="M520 330C572 420 592 560 562 642 542 692 502 702 480 696M540 420C565 500 565 590 540 650M480 580C500 620 492 660 470 662M500 500C515 560 512 620 495 655" />
 <path d="M540 310C545 325 555 330 565 320M580 312C585 330 598 330 600 315" stroke-width="4"/>
 <path d="M350 552L400 546 412 642 360 612ZM412 600L470 600 466 652 412 642" />
 <path d="M180 400C165 420 170 450 190 462" stroke-width="4"/>
</g>
<!-- ===== sketch boy + faint head ===== -->
<g transform="translate(505,335) scale(0.20716)" fill="none" stroke="#6e6e6e" stroke-width="3.800" stroke-linecap="round" stroke-linejoin="round">
 <path d="M100 400L150 370 200 456 265 482 306 582C230 562 160 540 130 500Z" fill="#e2e2e2" stroke="none"/>
 <path d="M150 392L215 370 250 442 200 456Z" fill="#cfcfcf" stroke="none"/>
 <path d="M170 130C150 190 160 260 195 310M230 100C205 160 205 220 240 270M270 85C250 140 255 190 290 235M340 110C335 160 350 205 385 235M410 160C425 210 440 255 445 290M100 200C95 250 110 300 140 330M90 250C85 280 95 310 110 325M280 250C275 280 265 310 250 335M310 240C300 275 290 305 280 330M355 250C350 275 345 295 348 310M130 140C115 180 110 220 115 260M360 100C380 130 400 165 410 200" stroke-width="3"/>
 <path d="M260 402C250 380 245 360 248 340M405 392C412 400 418 402 425 398M395 430C405 432 412 430 418 425" stroke-width="3"/>
 <path d="M130 500C160 520 230 545 300 560M120 440L160 520M400 440C430 450 450 465 452 480M440 500C430 540 410 575 392 595" stroke-width="2.500"/>
 <path d="M75 290C60 230 90 150 150 110 200 70 280 60 340 90 400 110 442 170 452 240 456 270 440 300 430 312"/>
 <path d="M200 60L240 82M230 55L250 92M280 70L300 60M100 120L132 130M65 225L100 215M400 120L416 105M75 290L95 300M320 80L335 68"/>
 <path d="M250 90C220 150 220 210 262 252M330 210C310 260 290 300 270 332M150 150C140 220 160 290 200 332M200 120C180 180 185 240 215 290M300 100C290 150 300 200 330 232M380 140C400 190 420 240 432 282M120 180C110 230 125 290 160 330M360 230C350 262 340 290 345 305"/>
 <path d="M410 300C400 340 395 370 406 392 390 412 396 432 380 462 340 472 290 442 260 402" stroke="#666"/>
 <path d="M288 322C310 306 340 310 352 326M388 312C400 300 415 300 422 306" stroke="#555" stroke-width="5"/>
 <ellipse cx="320" cy="330" rx="14" ry="8" stroke="#666"/><ellipse cx="320" cy="330" rx="6" ry="6" fill="#888" stroke="none"/>
 <ellipse cx="405" cy="316" rx="8" ry="6" fill="#888" stroke="none"/>
 <path d="M175 310C165 330 185 360 202 366M215 370L250 442M330 466L320 502M262 372L266 380"/>
 <path d="M100 400L150 370 200 456 265 482 306 582C230 562 160 540 130 500Z" stroke="#777"/>
 <path d="M400 415C440 420 466 440 466 470 460 520 430 570 390 606L376 520 396 480M306 582L330 500 376 520"/>
 <path d="M150 392L190 452M160 385L198 440M170 380L204 430M145 405L180 455" stroke-width="2"/>
 <path d="M270 455L300 475 320 470M280 470L295 495" stroke-width="2.500"/>
 <!-- faint head -->
 <g stroke="#c9c9c9" stroke-width="3">
  <path d="M598 240C596 150 650 95 728 95 806 95 862 150 860 240 858 330 800 385 728 385 656 385 600 330 598 240Z"/>
  <path d="M620 295C680 310 780 310 840 290M740 110L748 160M640 180V300M590 110L600 180M870 190L860 300" stroke-width="2"/>
 </g>
</g>
<g fill="none" stroke="#d2d2d2" stroke-width=".7">
 <circle cx="558.900" cy="506.600" r="30.700"/><path d="M548 478L550 535M564 477L566 536M530 500H588M536 528L584 484" stroke-width=".5" stroke="#dcdcdc"/>
 <circle cx="656.900" cy="507.200" r="30.700"/><circle cx="656.900" cy="507.200" r="21.800"/>
 <path d="M626 507.500H688M656.500 476V538" stroke-width=".6"/>
 <rect x="625" y="476" width="63" height="62" stroke="#e2e2e2" stroke-width=".5"/>
 <rect x="527" y="475" width="63" height="62" stroke="#e4e4e4" stroke-width=".5"/>
</g>
<!-- ===== bottom right characters ===== -->
<g transform="translate(720,530) scale(0.12937)">
 <path d="M520 360C560 420 640 470 660 540 670 590 620 622 560 606 580 580 560 560 520 540 560 520 540 460 500 400Z" fill="#4a3020"/>
 <path d="M545 470C580 520 600 560 590 600M520 440C560 490 580 540 570 590" stroke="#35200f" stroke-width="7" fill="none"/>
 <path d="M250 400L340 430 250 520 150 640 70 700 40 670 110 580 170 480Z" fill="#e2a526"/>
 <path d="M300 430L390 440 400 520 360 580 400 640 370 690 330 640 280 560Z" fill="#dc9d22"/>
 <path d="M350 440C330 500 340 540 330 580" stroke="#6a4418" stroke-width="10" fill="none"/>
 <path d="M345 320L480 290 520 330 490 440 420 460 350 420Z" fill="#d9962a"/>
 <path d="M500 300L545 340 500 450 430 440Z" fill="#e9b233"/>
 <path d="M450 270L560 250 640 200 660 240 580 310 480 320Z" fill="#e3a82e"/>
 <circle cx="612" cy="216" r="25" fill="#f1c7a2"/>
 <path d="M265 330L345 320 350 400 290 430 250 400Z" fill="#e8b48c"/>
 <path d="M280 250C310 225 380 225 410 250L380 300 310 330 275 300Z" fill="#f3efe9"/>
 <circle cx="300" cy="300" r="19" fill="#c43a30"/>
 <path d="M195 225C215 205 240 215 245 240L275 280 250 300 215 260Z" fill="#f0c39d"/><circle cx="212" cy="232" r="22" fill="#f3caa6"/>
 <path d="M330 100L400 50 410 70 345 120Z" fill="#e8b63a"/><path d="M330 105L360 100 355 160 335 165Z" fill="#e29a30"/>
 <path d="M350 180C370 110 450 90 490 150 500 190 470 220 450 240L400 200 360 210Z" fill="#553621"/>
 <path d="M340 190C350 240 370 280 390 300L400 230Z" fill="#553621"/>
 <path d="M390 170C420 150 460 170 455 210 440 240 410 240 395 225Z" fill="#f1c7a2"/>
 <path d="M480 130L540 140 560 180" stroke="#e9dcd6" stroke-width="8" fill="none"/><path d="M535 150L560 170" stroke="#d8584a" stroke-width="8"/>
 <ellipse cx="47" cy="712" rx="20" ry="30" fill="#2a2326" transform="rotate(30 47 712)"/>
 <ellipse cx="380" cy="665" rx="24" ry="32" fill="#2a2326" transform="rotate(20 380 665)"/>
</g>
<g transform="translate(790,485) scale(0.181)">
 <path d="M155 65L150 130M100 100C130 110 140 140 130 170" stroke="#e3ae2e" stroke-width="6" fill="none"/>
 <path d="M90 320C70 250 100 170 170 130 230 105 300 130 340 180 362 220 350 262 320 256 290 250 260 236 245 226 240 270 210 300 190 290 170 320 130 350 90 320Z" fill="#4d311f"/>
 <path d="M300 230L350 245 335 270M70 300L55 330 85 345M190 95L200 120" stroke="#4d311f" stroke-width="7" fill="none"/>
 <path d="M160 140C185 170 180 210 140 240 120 250 125 270 150 270" stroke="#e3ae2e" stroke-width="6" fill="none"/>
 <path d="M205 360L270 300 320 380 335 440 305 450 285 390 235 420Z" fill="#dfa426"/>
 <path d="M150 390L205 375 225 440 215 520 210 640 185 640 185 520 165 440Z" fill="#e0a628"/>
 <path d="M135 350L190 335 200 375 150 392Z" fill="#f2eee8"/>
 <path d="M195 345L225 320 236 345 216 396 200 390Z" fill="#efc4a2"/>
 <ellipse cx="140" cy="320" rx="20" ry="24" fill="#efc4a2"/>
 <path d="M115 300C125 280 150 278 165 295L150 305 130 320Z" fill="#4d311f"/>
 <ellipse cx="195" cy="655" rx="20" ry="13" fill="#2a2326" transform="rotate(30 195 655)"/>
 <ellipse cx="325" cy="447" rx="20" ry="13" fill="#2a2326" transform="rotate(35 325 447)"/>
 <ellipse cx="266" cy="440" rx="11" ry="15" fill="#2a2326"/>
</g>
<path d="M786.300 480.300v6M783.300 483.300h6" stroke="#777" stroke-width=".6" fill="none"/>

</svg>

<!-- left toolbar -->
<div class="abs" style="left:0;top:120px;width:12.500px;height:535px;background:#4e4e4e"></div>
<div class="abs" style="left:0;top:229.500px;width:12.500px;height:13px;background:#3b3b3b"></div>
<svg class="abs" style="left:0;top:120px" width="13" height="535" viewBox="0 120 13 535" fill="none" stroke="#c2c2c2" stroke-width=".8" stroke-linecap="round">
<path d="M3 122h7M3 123.500h7" stroke="#777" stroke-width=".6"/>
<path d="M5.500 123.500v7M2 127h7M4.500 124.500l1-1 1 1M4.500 129.500l1 1 1-1M3 126l-1 1 1 1M8 126l1 1-1 1"/>
<path d="M1.500 138h7v6h-7z" stroke-dasharray="1.200 .9"/>
<path d="M2 153q0-2.500 3.500-2.500t3.500 2.500-3.500 2.500q-2 0-2.500 1.500t1 1.500"/>
<path d="M2 171l5-6M7.500 163l.5 1.500M9.500 164.500l-1.500.5M5.500 163.500l1 1"/>
<path d="M2 180v6h6M.500 181.500h6v6"/>
<path d="M1.500 192h7v6h-7zM1.500 192l7 6M8.500 192l-7 6"/>
<path d="M2.500 213l4.500-5.500 1.500 1.500-4.500 5.500zM7 206.500l1.500-1.500 1.500 1.500-1.500 1.500"/>
<path d="M2 226.500l5-6.500 2 1.500-5 6.500zM3.500 224l2 1.500"/>
<path d="M8 231.500l-4 5.500 1 1 4-5.500zM3.500 237.500q-1.500.4-1.800 2.500 2.200-.2 2.800-1.800"/>
<path d="M3 253.500h5.500v-1.500h-5.500zM4 252v-1q1.500-.5 1-2a1.300 1.300 0 1 1 1.500 0q-.5 1.500 1 2v1"/>
<path d="M2 267.500l5.500-6.500 1.500 1.200-5.500 6.500zM6.500 267q2-1 2.500-3"/>
<path d="M2 281.500l3.500-4.500 3 2.300-3.500 4.500zM1.500 283.500h7"/>
<path d="M1.500 288h7.500v6h-7.500z" fill="#bbb"/>
<path d="M2 303q3-3 6-1l-2.500 4.500q-2 .5-3.500-3.500zM6 306.500l-.5 2.500"/>
<path d="M5 316a2.300 2.300 0 1 0 .1 0M7.500 320.500l1.500 2"/>
<path d="M2.500 336l4-7 2 3.500-3.500 3.500zM6 331l2-2"/>
<path d="M1.500 341.500h7.500M5.200 341.500v8M3.800 349.500h2.800" stroke-width="1.300"/>
<path d="M3 355.500l5.500 4-2.500.5-1 2.500z" fill="#d4d4d4"/>
<path d="M1.500 369h7.500v6h-7.500z"/>
<path d="M3 390v-5.500M5 389v-7M7 389.500v-6M9 390v-4.500M3 390q1 3 3.500 3t2.500-3"/>
<path d="M4.500 398.500m-2.800 0a2.800 2.800 0 1 0 5.600 0a2.800 2.800 0 1 0-5.600 0M6.500 400.500l2.500 2.500"/>
<path d="M2.500 413h.1M5.200 413h.1M7.900 413h.1" stroke-width="1.400"/>
<path d="M3.500 423.500q3-2 4.500 1M8 424.500l.300-1.800M8 424.500l-1.800-.3"/>
<rect x="-2" y="432" width="10" height="9.500" fill="#0a0a0a" stroke="#999" stroke-width=".5"/><rect x="4.500" y="437.500" width="5" height="8" fill="#fafafa" stroke="#999" stroke-width=".4"/>
<rect x="-2" y="432" width="10" height="9.500" fill="#0a0a0a" stroke="none"/>
<path d="M1.500 455h6.500v6h-6.500zM3 458l1.500-1.500 1.500 1.500" stroke="#bbb" stroke-width=".8"/><path d="M1 469h6.500v5.500h-6.500zM3 476.500h6v-5" stroke="#bbb" stroke-width=".8"/>
</svg>
<!-- status bar + hscroll -->
<div class="abs" style="left:12px;top:644px;width:856px;height:11px;background:#3d3d3d"></div>
<div class="abs" style="left:252px;top:646px;width:361px;height:7px;background:#646464"></div>
<div class="abs" style="left:613px;top:646px;width:246px;height:7px;background:#484848"></div>
<div class="p" style="left:16px;top:645.500px;font-size:6px;color:#e0e0e0">33.39%</div>
<div class="p" style="left:40px;top:645.500px;font-size:6.300px;color:#e0e0e0">5772 像素 x 4364 像素 (300 ppi) &nbsp;)</div>
<!-- vscroll -->
<div class="abs" style="left:860px;top:120px;width:8px;height:524px;background:#484848"></div>
<div class="abs" style="left:860.500px;top:310px;width:6px;height:170px;background:#666"></div>
<div class="abs" style="left:868px;top:86px;width:194px;height:569px;background:#515151"></div>
<div class="abs" style="left:862px;top:86px;width:190px;height:22px;background:#4b4b4b"></div>
<div class="abs" style="left:862px;top:108px;width:190px;height:66px;background:#535353"></div>
<div class="abs" style="left:1052px;top:86px;width:10px;height:90px;background:#484848"></div>
<div class="abs" style="left:862px;top:174px;width:200px;height:1px;background:#3e3e3e"></div>
<div class="abs" style="left:862px;top:114.4px;width:149px;height:4px;background:linear-gradient(90deg,#4a0000,#e8200c)"></div>
<div class="box" style="left:1014px;top:111.4px;width:21px;height:10px;border-color:#5e5e5e"></div>
<div class="p" style="left:1016px;top:112.4px;font-size:6px;color:#ddd">0</div>
<div class="abs" style="left:862px;top:128px;width:149px;height:4px;background:linear-gradient(90deg,#003a00,#14d61c)"></div>
<div class="box" style="left:1014px;top:125px;width:21px;height:10px;border-color:#5e5e5e"></div>
<div class="p" style="left:1016px;top:126px;font-size:6px;color:#ddd">0</div>
<div class="abs" style="left:862px;top:142px;width:149px;height:4px;background:linear-gradient(90deg,#00003c,#0c28e8)"></div>
<div class="box" style="left:1014px;top:139px;width:21px;height:10px;border-color:#5e5e5e"></div>
<div class="p" style="left:1016px;top:140px;font-size:6px;color:#ddd">0</div>
<div class="abs" style="left:862px;top:156.500px;width:182px;height:13px;background:linear-gradient(90deg,#12a83a 0%,#0fb0a0 18%,#1a78e0 33%,#2a2ad0 46%,#b020c0 60%,#e8206a 74%,#e81818 88%,#e83010 100%)"></div>
<div class="abs" style="left:862px;top:156.500px;width:182px;height:13px;background:linear-gradient(180deg,rgba(255,255,255,1) 0%,rgba(255,255,255,0) 38%,rgba(0,0,0,0) 58%,rgba(0,0,0,1) 100%)"></div>
<div class="abs" style="left:1040px;top:156.500px;width:4px;height:6.500px;background:#fff"></div><div class="abs" style="left:1040px;top:163px;width:4px;height:6.500px;background:#000"></div>
<svg class="abs" style="left:1030px;top:86px" width="32" height="90" viewBox="1030 86 32 90" fill="none" stroke="#cfcfcf" stroke-width=".9"><path d="M1036 88l1.500 1.500-1.500 1.500M1038 88l1.500 1.500-1.500 1.500M1046 88l3 3M1049 88l-3 3M1045 99h4M1045 101h4M1058 91.500v6.500h4M1059.500 93.500v-2.500h2.500"/><path d="M1053.500 131v6M1053.500 140v4M1053.500 148l2-3v6z" stroke="#9a9a9a"/></svg>
<div class="abs" style="left:890px;top:175px;width:172px;height:166px;background:#535353"></div>
<div class="abs" style="left:890px;top:341px;width:172px;height:4px;background:#4a4a4a"></div>
<div class="p" style="left:908.500px;top:175.1px;font-size:6.800px;color:#8d8d8d">纹理</div>
<div class="p" style="left:908.500px;top:187.1px;font-size:6.800px;color:#bdbdbd">纹理</div>
<div class="p" style="left:908.500px;top:200.0px;font-size:6.800px;color:#bdbdbd">双重画笔</div>
<div class="p" style="left:908.500px;top:213.0px;font-size:6.800px;color:#bdbdbd">颜色动态</div>
<div class="p" style="left:908.500px;top:225.5px;font-size:6.800px;color:#bdbdbd">传递</div>
<div class="p" style="left:908.500px;top:238.3px;font-size:6.800px;color:#bdbdbd">画笔笔势</div>
<div class="p" style="left:908.500px;top:250.7px;font-size:6.800px;color:#bdbdbd">杂色</div>
<div class="p" style="left:908.500px;top:263.2px;font-size:6.800px;color:#bdbdbd">湿边</div>
<div class="p" style="left:908.500px;top:276.2px;font-size:6.800px;color:#bdbdbd">建立</div>
<div class="p" style="left:908.500px;top:289.0px;font-size:6.800px;color:#bdbdbd">平滑</div>
<div class="p" style="left:908.500px;top:301.5px;font-size:6.800px;color:#bdbdbd">保护纹理</div>
<div class="abs" style="left:954px;top:175px;width:108px;height:21px;background:#4d4d4d"></div>
<div class="p" style="left:959px;top:188.500px;width:12px;text-align:center;font-size:5.500px;color:#c6c6c6">206</div>
<div class="p" style="left:976px;top:188.500px;width:12px;text-align:center;font-size:5.500px;color:#c6c6c6">50</div>
<div class="p" style="left:992.6px;top:188.500px;width:12px;text-align:center;font-size:5.500px;color:#c6c6c6">20</div>
<div class="p" style="left:1009px;top:188.500px;width:12px;text-align:center;font-size:5.500px;color:#c6c6c6">12</div>
<div class="p" style="left:1026.6px;top:188.500px;width:12px;text-align:center;font-size:5.500px;color:#c6c6c6">122</div>
<div class="p" style="left:1043px;top:188.500px;width:12px;text-align:center;font-size:5.500px;color:#c6c6c6">20</div>
<div class="p" style="left:956.500px;top:201px;font-size:6.800px;color:#bdbdbd;letter-spacing:1.500px">大小</div>
<div class="box" style="left:1033px;top:199.500px;width:32px;height:11px;border-color:#5c5c5c"></div><div class="p" style="left:1036px;top:201.300px;font-size:6.300px;color:#ddd">10 像素</div>
<div class="p" style="left:966px;top:224.800px;font-size:6.800px;color:#c6c6c6">翻转 X</div><div class="p" style="left:998.500px;top:224.800px;font-size:6.800px;color:#c6c6c6">翻转 Y</div>
<div class="p" style="left:969.500px;top:241.200px;font-size:6.800px;color:#c6c6c6">角度:</div><div class="box" style="left:988px;top:239.500px;width:30px;height:11px;border-color:#5c5c5c"></div><div class="p" style="left:990px;top:241.500px;font-size:6px;color:#ddd">-13°</div>
<div class="p" style="left:969.500px;top:256.800px;font-size:6.800px;color:#c6c6c6">圆度:</div><div class="box" style="left:988px;top:255px;width:30px;height:11px;border-color:#5c5c5c"></div><div class="p" style="left:990px;top:257px;font-size:6px;color:#ddd">100%</div>
<div class="p" style="left:956.500px;top:271px;font-size:6.800px;color:#bdbdbd">硬度</div>
<div class="box" style="left:1035px;top:269.500px;width:30px;height:11px;border-color:#5c5c5c"></div><div class="p" style="left:1037.500px;top:271.500px;font-size:6px;color:#ddd">100%</div>
<div class="p" style="left:966px;top:295.500px;font-size:6.800px;color:#c6c6c6">间距</div>
<div class="box" style="left:1035px;top:293.800px;width:30px;height:11px;border-color:#5c5c5c"></div><div class="p" style="left:1037.500px;top:295.800px;font-size:6px;color:#ddd">5%</div>
<svg class="abs" style="left:890px;top:175px" width="172" height="166" viewBox="890 175 172 166" fill="none" stroke="#cfcfcf" stroke-width=".8">
<rect x="899.800" y="176.60000000000002" width="5" height="5" stroke="#7e7e7e" stroke-width=".7" fill="#4c4c4c"/>
<path d="M941.300 182.10000000000002v-3.300h5.200v3.300zM942.500 178.8v-1.300q0-1.300 1.400-1.300t1.400 1.300v1.300" stroke="#c4c4c4" stroke-width=".8"/>
<rect x="899.800" y="188.60000000000002" width="5" height="5" stroke="#7e7e7e" stroke-width=".7" fill="#4c4c4c"/>
<path d="M941.300 194.10000000000002v-3.300h5.200v3.300zM942.500 190.8v-1.300q0-1.300 1.400-1.300t1.400 1.300v1.300" stroke="#c4c4c4" stroke-width=".8"/>
<rect x="899.800" y="201.5" width="5" height="5" stroke="#7e7e7e" stroke-width=".7" fill="#4c4c4c"/>
<path d="M941.300 207.0v-3.300h5.200v3.300zM942.500 203.7v-1.300q0-1.300 1.400-1.300t1.400 1.300v1.300" stroke="#c4c4c4" stroke-width=".8"/>
<rect x="899.800" y="214.5" width="5" height="5" stroke="#7e7e7e" stroke-width=".7" fill="#4c4c4c"/>
<path d="M941.300 220.0v-3.300h5.200v3.300zM942.500 216.7v-1.300q0-1.300 1.400-1.300t1.400 1.300v1.300" stroke="#c4c4c4" stroke-width=".8"/>
<rect x="899.500" y="226.7" width="5.600" height="5.600" fill="#e8e8e8" stroke="none"/><path d="M900.600 229.39999999999998l1.500 1.600 2.200-3.200" stroke="#333" stroke-width="1.100"/>
<path d="M941.300 232.5v-3.300h5.200v3.300zM942.500 229.2v-1.300q0-1.300 1.400-1.300t1.400 1.300v1.300" stroke="#c4c4c4" stroke-width=".8"/>
<rect x="899.800" y="239.8" width="5" height="5" stroke="#7e7e7e" stroke-width=".7" fill="#4c4c4c"/>
<path d="M941.300 245.3v-3.300h5.200v3.300zM942.500 242.0v-1.300q0-1.300 1.400-1.300t1.400 1.300v1.300" stroke="#c4c4c4" stroke-width=".8"/>
<rect x="899.800" y="252.20000000000002" width="5" height="5" stroke="#7e7e7e" stroke-width=".7" fill="#4c4c4c"/>
<path d="M941.300 257.7v-3.300h5.200v3.300zM942.500 254.4v-1.300q0-1.300 1.400-1.300t1.400 1.300v1.300" stroke="#c4c4c4" stroke-width=".8"/>
<rect x="899.800" y="264.7" width="5" height="5" stroke="#7e7e7e" stroke-width=".7" fill="#4c4c4c"/>
<path d="M941.300 270.2v-3.300h5.200v3.300zM942.500 266.9v-1.300q0-1.300 1.400-1.300t1.400 1.300v1.300" stroke="#c4c4c4" stroke-width=".8"/>
<rect x="899.800" y="277.7" width="5" height="5" stroke="#7e7e7e" stroke-width=".7" fill="#4c4c4c"/>
<path d="M941.300 283.2v-3.300h5.200v3.300zM942.500 279.9v-1.300q0-1.300 1.400-1.300t1.400 1.300v1.300" stroke="#c4c4c4" stroke-width=".8"/>
<rect x="899.500" y="290.2" width="5.600" height="5.600" fill="#e8e8e8" stroke="none"/><path d="M900.600 292.9l1.500 1.600 2.200-3.200" stroke="#333" stroke-width="1.100"/>
<path d="M941.300 296.0v-3.300h5.200v3.300zM942.500 292.7v-1.300q0-1.300 1.400-1.300t1.400 1.300v1.300" stroke="#c4c4c4" stroke-width=".8"/>
<rect x="899.800" y="303.0" width="5" height="5" stroke="#7e7e7e" stroke-width=".7" fill="#4c4c4c"/>
<path d="M941.300 308.5v-3.300h5.200v3.300zM942.500 305.2v-1.300q0-1.300 1.400-1.300t1.400 1.300v1.300" stroke="#c4c4c4" stroke-width=".8"/>
<g stroke="none">
<defs><radialGradient id="sb"><stop offset="0" stop-color="#e8e8e8"/><stop offset="1" stop-color="#e8e8e8" stop-opacity="0"/></radialGradient></defs>
<path d="M961.500 180.500l3-1.500 3.500 2-1 3.500-3 2-2.500-2.500z" fill="#e8e8e8"/><circle cx="965" cy="183" r="1.300" fill="#4d4d4d"/>
<circle cx="982" cy="183" r="4.300" fill="#f2f2f2"/>
<circle cx="998.600" cy="183" r="4.500" fill="url(#sb)"/>
<ellipse cx="1015" cy="183.500" rx="2.200" ry="1" fill="#ddd"/>
<circle cx="1032.600" cy="183" r="5" fill="url(#sb)"/>
<path d="M1045 186.500l4-6.500 4 6.500z" fill="#f2f2f2"/>
</g>
<path d="M957 216h105" stroke="#7a7a7a" stroke-width=".9"/><path d="M959.200 222l2.600-4.200 2.600 4.200z" fill="#eee" stroke="none"/>
<rect x="957" y="226" width="5.200" height="5.200" stroke="#7e7e7e" stroke-width=".7" fill="#4c4c4c"/><rect x="992" y="226" width="5.200" height="5.200" stroke="#7e7e7e" stroke-width=".7" fill="#4c4c4c"/>
<rect x="1028.500" y="226" width="40" height="43.500" stroke="#777" stroke-width=".8" fill="#505050"/><circle cx="1048.700" cy="246.600" r="13.500" stroke="#9a9a9a" stroke-width=".9"/><path d="M1045.600 260l6-27M1036 243.500l26 6" stroke="#8a8a8a" stroke-width=".7"/><circle cx="1051.700" cy="233.400" r="1.700" fill="#f4f4f4" stroke="none"/><circle cx="1045.600" cy="259.800" r="1.900" fill="#f4f4f4" stroke="none"/>
<path d="M957 284.500h105" stroke="#7a7a7a" stroke-width=".9"/>
<rect x="956.800" y="296.500" width="5.600" height="5.600" fill="#e8e8e8" stroke="none"/><path d="M957.900 299.200l1.500 1.600 2.200-3.200" stroke="#333" stroke-width="1.100"/>
<path d="M957 309h105" stroke="#7a7a7a" stroke-width=".9"/><path d="M956.200 315.200l2.600-4.200 2.600 4.200z" fill="#eee" stroke="none"/>
</svg>
<div class="abs" style="left:893.500px;top:345.500px;width:169px;height:53.500px;background:#6d6d6d"></div>
<svg class="abs" style="left:893px;top:345px" width="169" height="54" viewBox="893 345 169 54" fill="none"><path d="M910.500 372.300C922 367 934 364.800 946 365.300c22 1 40 14.500 66 15.200 17 .4 32-6 50-12.500" stroke="#f6f6f6" stroke-width="3.800" stroke-linecap="round"/></svg>
<div class="abs" style="left:890px;top:399px;width:172px;height:17px;background:#4c4c4c"></div>
<div class="abs" style="left:890px;top:416px;width:172px;height:16.500px;background:#484848"></div>
<div class="abs" style="left:933px;top:416px;width:20.500px;height:16.500px;background:#565656"></div>
<div class="p" style="left:895px;top:419.300px;font-size:6px;color:#8e8e8e">色板</div><div class="p" style="left:916px;top:419.300px;font-size:6px;color:#8e8e8e">渐变</div><div class="p" style="left:937px;top:419.300px;font-size:6px;color:#e8e8e8">图案</div>
<div class="abs" style="left:890px;top:432.500px;width:172px;height:1px;background:#3c3c3c"></div>
<div class="abs" style="left:890px;top:433.500px;width:172px;height:15px;background:#484848"></div>
<div class="abs" style="left:892px;top:433.500px;width:19.500px;height:15px;background:#565656"></div>
<div class="p" style="left:895px;top:437px;font-size:6.300px;color:#f0f0f0;font-weight:bold">属性</div>
<div class="abs" style="left:890px;top:448.500px;width:172px;height:1px;background:#3c3c3c"></div>
<div class="abs" style="left:890px;top:449.500px;width:172px;height:15px;background:#484848"></div>
<div class="abs" style="left:892.500px;top:449.500px;width:18.500px;height:15px;background:#535353"></div>
<div class="p" style="left:895px;top:453px;font-size:6.300px;color:#f0f0f0;font-weight:bold">图层</div><div class="p" style="left:915.500px;top:453px;font-size:6.300px;color:#9a9a9a">通道</div><div class="p" style="left:936.500px;top:453px;font-size:6.300px;color:#9a9a9a">路径</div>
<div class="abs" style="left:890px;top:464.500px;width:172px;height:178px;background:#535353"></div>
<div class="box" style="left:893px;top:469.500px;width:43px;height:11px;border-color:#5e5e5e;background:#4a4a4a"></div>
<div class="p" style="left:902px;top:471.300px;font-size:6.300px;color:#d0d0d0">类型</div>
<div class="box" style="left:893px;top:484.500px;width:61px;height:11.500px;border-color:#5e5e5e;background:#4a4a4a"></div>
<div class="p" style="left:896.500px;top:486.500px;font-size:6.600px;color:#e6e6e6">正常</div>
<div class="p" style="left:958px;top:486.500px;font-size:6.400px;color:#c8c8c8">不透明度:</div>
<div class="box" style="left:987.500px;top:484.500px;width:29px;height:11.500px;border-color:#5e5e5e;background:#4a4a4a"></div><div class="p" style="left:989px;top:486.800px;font-size:6px;color:#e6e6e6">100%</div>
<div class="p" style="left:893.500px;top:501.200px;font-size:6.600px;color:#c8c8c8">锁定:</div>
<div class="p" style="left:970.500px;top:501.200px;font-size:6.600px;color:#c8c8c8">填充:</div>
<div class="box" style="left:987.500px;top:499.300px;width:29px;height:11.500px;border-color:#5e5e5e;background:#4a4a4a"></div><div class="p" style="left:989px;top:501.600px;font-size:6px;color:#e6e6e6">100%</div>
<div class="abs" style="left:890px;top:514px;width:172px;height:1px;background:#474747"></div>
<div class="abs" style="left:890px;top:532.5px;width:172px;height:1px;background:#4a4a4a"></div>
<div class="p" style="left:930.500px;top:520.0px;font-size:6.500px;color:#e0e0e0">图层 35</div>
<div class="abs" style="left:890px;top:550.5px;width:172px;height:1px;background:#4a4a4a"></div>
<div class="p" style="left:930.500px;top:538.0px;font-size:6.500px;color:#e0e0e0">图层 33</div>
<div class="abs" style="left:890px;top:568.5px;width:172px;height:1px;background:#4a4a4a"></div>
<div class="p" style="left:930.500px;top:556.0px;font-size:6.500px;color:#e0e0e0">图层 32</div>
<div class="abs" style="left:890px;top:586.3px;width:172px;height:1px;background:#4a4a4a"></div>
<div class="p" style="left:930.500px;top:573.8px;font-size:6.500px;color:#e0e0e0">图层 3</div>
<div class="abs" style="left:890px;top:604.1px;width:172px;height:1px;background:#4a4a4a"></div>
<div class="p" style="left:930.500px;top:591.6px;font-size:6.500px;color:#e0e0e0">图层 2</div>
<div class="abs" style="left:890px;top:621.8px;width:172px;height:1px;background:#4a4a4a"></div>
<div class="p" style="left:930.500px;top:609.3px;font-size:6.500px;color:#e0e0e0">图层 29</div>
<div class="abs" style="left:890px;top:623.0px;width:172px;height:17px;background:#6a6a6a"></div>
<div class="p" style="left:930.500px;top:627.5px;font-size:6.500px;color:#e0e0e0">图层 28</div>
<div class="abs" style="left:890px;top:641.500px;width:172px;height:13.500px;background:#4e4e4e"></div>
<div class="p" style="left:983px;top:644px;font-size:6.500px;font-style:italic;color:#dcdcdc;font-family:'Liberation Serif',serif">fx</div>
<svg class="abs" style="left:890px;top:464px" width="172" height="192" viewBox="890 464 172 192" fill="none" stroke="#d6d6d6" stroke-width=".9">
<defs><pattern id="chk" width="2.400" height="2.400" patternUnits="userSpaceOnUse"><rect width="2.400" height="2.400" fill="#fff"/><rect width="1.200" height="1.200" fill="#e6e6e6"/><rect x="1.200" y="1.200" width="1.200" height="1.200" fill="#e6e6e6"/></pattern></defs>
<circle cx="897.500" cy="474.500" r="1.700"/><path d="M898.800 475.800l1.700 1.700"/><path d="M930.500 474l1.600 1.600 1.600-1.600M949.500 489.500l1.600 1.600 1.600-1.600M1010.500 489.500l1.600 1.600 1.600-1.600M1010.500 504.500l1.600 1.600 1.600-1.600" stroke="#aaa"/>
<rect x="946.300" y="472.300" width="5.600" height="4.600" rx=".5"/><path d="M947 476l1.500-1.700 1.200 1 .8-.7 1 1.400" stroke-width=".6"/>
<circle cx="962" cy="474.700" r="2.500"/><path d="M962 472.200a2.500 2.500 0 0 1 0 5z" fill="#d6d6d6" stroke="none"/>
<path d="M971.800 472.300h4.800M974.200 472.300v5.200M973.300 477.500h1.800" stroke-width="1.100"/>
<rect x="984.800" y="472.500" width="4.600" height="4.600"/><path d="M983.800 472.500h1M989.400 472.500h1M983.800 477.100h1M989.400 477.100h1" stroke-width="1.300"/>
<path d="M998 477.500v-4.800h3l1.500 1.500v3.300z"/><rect x="999.200" y="475" width="2.200" height="2.500" fill="#d6d6d6" stroke="none"/>
<circle cx="1014.300" cy="471.800" r="1.900" fill="#f0f0f0" stroke="none"/><path d="M1014.300 474v3" stroke="#777"/>
<rect x="913.500" y="502" width="5.200" height="5.200" stroke-width=".7"/><path d="M913.500 503.700h5.200M913.500 505.400h5.200M915.200 502v5.200M916.900 502v5.200" stroke-width=".5"/>
<path d="M931 501.500l-3.800 5 .8.800 3.800-5zM926.800 507q-.8.300-1 1.600 1.300-.2 1.700-1" fill="#eee" stroke="#eee" stroke-width=".5"/>
<path d="M939 501.300v6.800M935.600 504.700h6.800M938 502.300l1-1 1 1M938 507.100l1 1 1-1M936.600 503.700l-1 1 1 1M941.400 503.700l1 1-1 1" stroke-width=".7"/>
<path d="M948.500 501.300v5.500h5.500M947.300 502.800h5.500v5.500" stroke-width=".9"/>
<rect x="960" y="504" width="5.200" height="4" fill="#e6e6e6" stroke="none"/><path d="M961.200 504v-1.300q0-1.400 1.400-1.400t1.400 1.400v1.300" stroke="#e6e6e6"/>
<rect x="909" y="517.5" width="15.200" height="13" fill="url(#chk)" stroke="#d8d8d8" stroke-width=".8"/>
<path d="M894.800 524q3.500-3.600 7 0q-3.500 3.600-7 0z" stroke="#e6e6e6" stroke-width=".9"/><circle cx="898.300" cy="524" r="1.200" fill="#e6e6e6" stroke="none"/>
<rect x="909" y="535.5" width="15.200" height="13" fill="url(#chk)" stroke="#d8d8d8" stroke-width=".8"/>
<rect x="895.300" y="539" width="6" height="6" stroke="#6a6a6a" stroke-width=".6"/>
<rect x="909" y="553.5" width="15.200" height="13" fill="url(#chk)" stroke="#d8d8d8" stroke-width=".8"/>
<path d="M894.800 560q3.500-3.600 7 0q-3.500 3.600-7 0z" stroke="#e6e6e6" stroke-width=".9"/><circle cx="898.300" cy="560" r="1.200" fill="#e6e6e6" stroke="none"/>
<rect x="909" y="571.3" width="15.200" height="13" fill="url(#chk)" stroke="#d8d8d8" stroke-width=".8"/>
<rect x="909" y="589.1" width="15.200" height="13" fill="url(#chk)" stroke="#d8d8d8" stroke-width=".8"/>
<rect x="909" y="606.8" width="15.200" height="13" fill="url(#chk)" stroke="#d8d8d8" stroke-width=".8"/>
<rect x="909" y="625.0" width="15.200" height="13" fill="url(#chk)" stroke="#d8d8d8" stroke-width=".8"/>
<path d="M894.800 631.5q3.500-3.600 7 0q-3.500 3.600-7 0z" stroke="#e6e6e6" stroke-width=".9"/><circle cx="898.300" cy="631.5" r="1.200" fill="#e6e6e6" stroke="none"/>
<path d="M969 648h2.500M972.500 648h2.500" stroke="#777"/>
<rect x="994" y="645.300" width="5.600" height="5.200" fill="#e6e6e6" stroke="none"/><circle cx="996.800" cy="647.900" r="1.300" fill="#4e4e4e" stroke="none"/>
<circle cx="1011" cy="648" r="2.700" stroke="#e6e6e6"/><path d="M1011 645.300a2.700 2.700 0 0 0 0 5.400z" fill="#e6e6e6" stroke="none"/>
<path d="M1021.500 650.500v-4.800h2.300l.9 1h3.300v3.800z" fill="#e6e6e6" stroke="none"/>
<rect x="1035.500" y="645.300" width="5.200" height="5.600" stroke="#e6e6e6" stroke-width=".8"/><path d="M1038.100 646.800v2.600M1036.800 648.100h2.600" stroke-width=".7"/>
<path d="M1049.500 646.300h5M1050.200 646.300v4.600h3.600v-4.600M1051.300 645.300h1.400" stroke="#e6e6e6" stroke-width=".8"/>
</svg>
<div class="p" style="left:910px;top:585px;font-size:12px;line-height:13px;font-weight:bold;color:rgba(255,255,255,.35);letter-spacing:1px">TT<span style="font-size:11px">云</span></div>
<div class="p" style="left:909px;top:603.500px;font-size:7.600px;color:rgba(235,235,235,.55);letter-spacing:.15px">TT CLOUD GALLERY</div>
<div class="abs" style="left:990px;top:415px;width:50px;height:22px;border-radius:11px;background:#2f353e"></div>
<div class="abs" style="left:977.500px;top:410.500px;width:30px;height:30px;border-radius:15px;background:#3d4552;border:1px solid #4c5563"></div>
<svg class="abs" style="left:976px;top:409px" width="34" height="34" viewBox="976 409 34 34" fill="none"><path d="M992.600 411.800a13.800 13.800 0 0 1 11.500 21.600" stroke="#2fb7a5" stroke-width="1.200"/></svg>
<div class="p" style="left:983.500px;top:419.500px;font-size:13px;line-height:13px;color:#c9d3e2;letter-spacing:-.5px">33<span style="font-size:6px;letter-spacing:0">%</span></div>
<div class="abs" style="left:1010.500px;top:419.300px;width:2.600px;height:2.600px;border-radius:2px;background:#2f8fe0"></div><div class="abs" style="left:1010.500px;top:430.300px;width:2.600px;height:2.600px;border-radius:2px;background:#2fa55a"></div>
<div class="p" style="left:1015px;top:416.500px;font-size:6.800px;font-weight:bold;color:#e6e9ee">24.5<span style="font-size:4.500px;font-weight:normal;color:#aab"> K/s</span></div>
<div class="p" style="left:1017.500px;top:427.500px;font-size:6.800px;font-weight:bold;color:#e6e9ee">0.7<span style="font-size:4.500px;font-weight:normal;color:#aab"> K/s</span></div>
<div class="abs" style="left:1050px;top:357px;width:20px;height:71.500px;border-radius:8px;background:#1c1c1c"></div>
<svg class="abs" style="left:1050px;top:380px" width="12" height="30" viewBox="1050 380 12 30"><path d="M1062 389.500l-4.500 3.500 4.500 3.500z" fill="#fff"/><rect x="1050.500" y="404" width="1.800" height="5" fill="#555"/></svg>
<div class="abs" style="left:750.500px;top:86.500px;width:112px;height:99.500px;background:#4e4e4e;box-shadow:0 0 2px rgba(0,0,0,.5)"></div>
<div class="abs" style="left:750.500px;top:86.500px;width:112px;height:21px;background:#474747"></div>
<div class="abs" style="left:750.500px;top:93px;width:32px;height:14.500px;background:#545454"></div>
<div class="p" style="left:756px;top:95.800px;font-size:6px;color:#f0f0f0">工具预设</div>
<div class="abs" style="left:752px;top:109px;width:102px;height:62px;background:#4a4a4a"></div>
<div class="abs" style="left:752px;top:122.5px;width:102px;height:1px;background:#434343"></div>
<div class="abs" style="left:752px;top:135.2px;width:102px;height:1px;background:#434343"></div>
<div class="abs" style="left:752px;top:147.7px;width:102px;height:1px;background:#434343"></div>
<div class="abs" style="left:752px;top:160.2px;width:102px;height:1px;background:#434343"></div>
<div class="abs" style="left:854.500px;top:109px;width:5px;height:62px;background:#444"></div>
<div class="abs" style="left:854.500px;top:119px;width:5px;height:16.500px;background:#6c6c6c"></div>
<div class="p" style="left:766.500px;top:112.3px;font-size:6.300px;color:#f2f2f2">Best line</div>
<div class="p" style="left:766.500px;top:125.0px;font-size:6.300px;color:#bdbdbd">paiting 画笔</div>
<div class="p" style="left:766.500px;top:137.5px;font-size:6.300px;color:#a8a8a8">线稿勾图</div>
<div class="p" style="left:766.500px;top:150.0px;font-size:6.300px;color:#bdbdbd">动势线笔 起稿笔</div>
<div class="p" style="left:766.500px;top:162.0px;font-size:6.300px;color:#bdbdbd">铅笔</div>
<div class="abs" style="left:751px;top:171px;width:111px;height:14.500px;background:#4e4e4e"></div>
<div class="p" style="left:762.800px;top:172.300px;font-size:6.300px;color:#cfcfcf">仅限当前工具</div>
<svg class="abs" style="left:750px;top:86px" width="113" height="100" viewBox="750 86 113 100" fill="none" stroke="#cfcfcf" stroke-width=".9"><path d="M846.500 88l1.400 1.400-1.400 1.400M848.600 88l1.400 1.400-1.400 1.400M856 88l2.800 2.800M858.800 88l-2.800 2.800M855.500 98.300h4M855.500 100.300h4"/><path d="M761.800 112.0l-3.600 5 .9.900 3.900-5zM757.700 117.6q-1.500.4-1.800 2.500 2-.2 2.600-1.600z" fill="#efefef" stroke="#efefef" stroke-width=".4"/><path d="M761.800 124.7l-3.600 5 .9.900 3.900-5zM757.700 130.3q-1.500.4-1.800 2.500 2-.2 2.600-1.600z" fill="#efefef" stroke="#efefef" stroke-width=".4"/><path d="M761.800 137.2l-3.600 5 .9.900 3.900-5zM757.700 142.8q-1.500.4-1.800 2.500 2-.2 2.600-1.600z" fill="#efefef" stroke="#efefef" stroke-width=".4"/><path d="M761.800 149.7l-3.600 5 .9.900 3.900-5zM757.700 155.3q-1.500.4-1.800 2.500 2-.2 2.600-1.600z" fill="#efefef" stroke="#efefef" stroke-width=".4"/><path d="M761.800 161.7l-3.600 5 .9.900 3.900-5zM757.700 167.3q-1.500.4-1.800 2.500 2-.2 2.600-1.600z" fill="#efefef" stroke="#efefef" stroke-width=".4"/><rect x="754.300" y="173.800" width="4.800" height="4.800" fill="#e8e8e8" stroke="none"/><path d="M755.200 176.200l1.300 1.400 1.900-2.800" stroke="#333" stroke-width="1"/><rect x="825.500" y="173.700" width="5" height="5" stroke="#d0d0d0" stroke-width=".8"/><path d="M828 175v2.400M826.800 176.200h2.400" stroke-width=".6"/><path d="M841 174.500h4.400M841.700 174.500v4.300h3v-4.300M842.600 173.600h1.200" stroke="#8a8a8a" stroke-width=".8"/></svg>
<div class="abs" style="left:0;top:655px;width:1062px;height:24px;background:#d1d1d1"></div>
<div class="abs" style="left:401.500px;top:659.500px;width:52px;height:15.500px;border-radius:8px;background:#ececec;border:1px solid #c2c2c2"></div>
<div class="p" style="left:426.500px;top:663.500px;font-size:6.500px;color:#333">搜索</div>
<div class="p" style="left:19px;top:658.500px;font-size:6.300px;color:#333">20°C</div><div class="p" style="left:19px;top:667.500px;font-size:6px;color:#555">多云</div>
<div class="p" style="left:883px;top:658.500px;font-size:6.300px;color:#222">48°C</div><div class="p" style="left:883.500px;top:667.500px;font-size:6.300px;color:#222">CPU</div>
<div class="p" style="left:1045px;top:658.200px;font-size:6px;color:#222">22:24</div><div class="p" style="left:1035px;top:667.500px;font-size:6px;color:#222">2023/3/11</div>
<div class="p" style="left:986px;top:662px;font-size:7px;color:#222">英</div>
<svg class="abs" style="left:0;top:655px" width="1062" height="24" viewBox="0 655 1062 24" fill="none">
<!-- weather -->
<circle cx="9" cy="662.500" r="2.800" fill="#f2b53a"/><path d="M3.500 671.500h9.500a2.400 2.400 0 0 0 0-4.800 3.600 3.600 0 0 0-6.800-.6 2.800 2.800 0 0 0-2.700 5.400z" fill="#eaf1fb" stroke="#8fb2e4" stroke-width=".8"/>
<!-- windows -->
<g fill="#1f8fe8"><rect x="382" y="661.300" width="5.400" height="5.400"/><rect x="388.200" y="661.300" width="5.400" height="5.400"/><rect x="382" y="667.500" width="5.400" height="5.400"/><rect x="388.200" y="667.500" width="5.400" height="5.400"/></g>
<circle cx="419" cy="666.500" r="2.300" stroke="#333" stroke-width=".9"/><path d="M420.700 668.200l1.800 1.800" stroke="#333" stroke-width=".9"/>
<!-- task view -->
<rect x="461.500" y="662" width="8" height="8" fill="#2b2b2b"/><rect x="464" y="664.500" width="8" height="7" fill="#e6e6e6" stroke="#9a9a9a" stroke-width=".5"/>
<!-- edge -->
<circle cx="490.500" cy="667" r="5.600" fill="#1b86d8"/><path d="M485.500 668.500q.5-5 5.500-5 4.500.3 5 4-2-2.300-5-1.500-2.600 1-2 4 .7 2 3 2.400-4.500.8-6.500-3.900z" fill="#3fd08a"/><circle cx="491.500" cy="667.800" r="2" fill="#d3d3d3"/>
<!-- QQ -->
<ellipse cx="514" cy="667.500" rx="3.800" ry="5.200" fill="#1a1a1a"/><ellipse cx="514" cy="669.800" rx="2.300" ry="2.700" fill="#fff"/><path d="M510.500 668.500h7l-1 1.500h-5z" fill="#e0342c"/><ellipse cx="514" cy="666.200" rx="1.300" ry=".6" fill="#f5a623"/><path d="M510 672.500q-1.300.3-1 1.200h3zM518 672.500q1.300.3 1 1.200h-3z" fill="#f5a623"/>
<!-- folder -->
<path d="M530 661.500h4.500l1.200 1.500h6.800v9h-12.500z" fill="#f5c542"/><rect x="530" y="664.800" width="12.500" height="7.200" fill="#fbd967"/><rect x="532.500" y="669" width="7.500" height="2.200" fill="#2d7ed6"/>
<!-- S app -->
<rect x="553.500" y="660.800" width="13" height="12.500" rx="1" fill="#2a72c4"/><path d="M555 664q5-3 10 0M555 667.500q5 2.500 10-1M555 671q5-2.500 10 0" stroke="#cfe3f7" stroke-width="1.300"/>
<!-- PS -->
<rect x="576.500" y="660.500" width="12.500" height="12.500" rx="1.500" fill="#0a1c33"/><rect x="579" y="675.200" width="7.500" height="1.300" fill="#2a7fd8"/>
<!-- W -->
<rect x="596.500" y="659.500" width="17" height="17" rx="2" fill="#e4d7d9"/><circle cx="605" cy="667.300" r="5.800" fill="#fbfbfb"/><rect x="603.500" y="675.500" width="3" height="1.200" fill="#d82c2c"/>
<!-- TCY -->
<rect x="620.500" y="659.500" width="17.500" height="17" rx="2" fill="#e2d4d8"/><rect x="627.500" y="675.500" width="3" height="1.200" fill="#d82c2c"/>
<!-- blue circle -->
<circle cx="652" cy="667" r="5.300" fill="#2a6fe0"/><circle cx="652.500" cy="666.500" r="2.500" fill="#fff"/><path d="M651 666.500q1.500 1.800 3-1" stroke="#2a6fe0" stroke-width=".8"/>
<!-- colorful -->
<rect x="670" y="660.500" width="12.500" height="13" rx="2.500" fill="#35b6e8"/><rect x="670" y="660.500" width="3" height="13" rx="1.500" fill="#f5b921"/><rect x="679.500" y="660.500" width="3" height="13" rx="1.500" fill="#ee5a8f"/><rect x="673.500" y="664" width="5.500" height="6.500" fill="#fff" stroke="#1a5fb4" stroke-width=".7"/>
<g fill="#8a8a8a"><rect x="489.500" y="676" width="2.500" height="1"/><rect x="535" y="676" width="2.500" height="1"/><rect x="558.500" y="676" width="2.500" height="1"/><rect x="651" y="676" width="2.500" height="1"/><rect x="675" y="676" width="2.500" height="1"/></g>
<!-- tray -->
<path d="M902.500 668l2.500-2.500 2.500 2.500" stroke="#333" stroke-width=".9"/>
<rect x="914.500" y="664.500" width="5" height="5.500" rx="1" fill="#3b82d6"/><path d="M915.500 664.500v-1.500q1.500-1.500 3 0v1.500" stroke="#3b82d6" stroke-width=".9"/>
<path d="M925.500 662.500h5.500v4q-.5 2.500-2.700 3.500-2.300-1-2.800-3.500z" fill="#3a6fd8"/><circle cx="928.200" cy="665.800" r="1.300" fill="#dfe8fb"/>
<ellipse cx="942" cy="666.500" rx="2.800" ry="3.800" fill="#222"/><ellipse cx="942" cy="668.200" rx="1.700" ry="2" fill="#fff"/><path d="M939 670.500h6l.6 1.200h-7.200z" fill="#f5a623"/>
<rect x="955.300" y="661.800" width="2.400" height="5" rx="1.200" fill="#3b82d6"/><path d="M953.800 666q0 2.800 2.700 2.800t2.700-2.800M956.500 668.800v2" stroke="#3b82d6" stroke-width=".8"/>
<path d="M966.500 671l2.500-5.500 3 1.500-4 4.500zM969.500 665l2-2.500 2 1-1.200 2.800" stroke="#444" stroke-width=".8"/>
<path d="M1002.500 665.500q3.500-3 7 0M1003.800 667.300q2.200-1.800 4.400 0" stroke="#333" stroke-width=".9"/><circle cx="1006" cy="669.300" r=".8" fill="#333"/>
<path d="M1017 665.800h1.500l2-1.800v6l-2-1.800h-1.500z" fill="#333"/><path d="M1022 665q1.500 2 0 4" stroke="#333" stroke-width=".7"/>
</svg>
<div class="p" style="left:578.800px;top:663.300px;font-size:6.500px;font-weight:bold;color:#39a5ff;letter-spacing:-.3px">Ps</div>
<div class="p" style="left:601.800px;top:663px;font-size:7.500px;font-weight:bold;color:#4a7fd0">ω</div>
<div class="p" style="left:623.500px;top:663.800px;font-size:6px;font-weight:bold;color:#4a3a68;letter-spacing:-.2px">TCY</div>



</div>

<!-- ===== progress ===== -->
<div class="t" style="left:8px;top:718.700px;font-size:12px;letter-spacing:-.9px;color:#fff">02:25:21</div>
<div class="abs" style="left:48px;top:721.200px;width:967px;height:3px;background:#5a5a5a;border-radius:1.500px"></div>
<div class="abs" style="left:48px;top:721.200px;width:952px;height:3px;background:#0c98f3;border-radius:1.500px"></div>
<div class="t" style="left:1025px;top:718.700px;font-size:12px;letter-spacing:-.9px;color:#fff">02:27:37</div>

<!-- ===== bottom controls ===== -->
<svg class="abs" style="left:0;top:740px" width="160" height="33" viewBox="0 740 160 33" fill="#fff" stroke="#fff" stroke-linejoin="round">
  <path d="M25.500 749.300v17.700l14.300-8.850z" stroke-width="5.500"/>
  <rect x="80" y="750.500" width="2.600" height="14.500" rx="1" stroke="none"/>
  <path d="M93 752.500v10.500l-7.500-5.250z" stroke-width="2.500"/>
  <path d="M125 752.500v10.500l7.500-5.250z" stroke-width="2.500"/>
  <rect x="135.600" y="750.500" width="2.600" height="14.500" rx="1" stroke="none"/>
</svg>
<div class="ctl" style="left:677px;top:749px">倍速</div>
<div class="ctl" style="left:728px;top:749px;color:#f3cf96">超清</div>
<div class="ctl" style="left:778px;top:749px">字幕</div>
<div class="ctl" style="left:830px;top:749px">查找</div>
<div class="svip" style="left:742px;top:737.500px">SVIP</div>
<div class="svip" style="left:844px;top:737.500px">SVIP</div>
<svg class="abs" style="left:880px;top:740px" width="182" height="33" viewBox="880 740 182 33" fill="none" stroke="#fff" stroke-width="2" stroke-linecap="round" stroke-linejoin="round">
  <!-- list -->
  <path d="M891 749.500h12M891 755.800h12M891 762h12" stroke-width="2.200"/>
  <g fill="#fff" stroke="none"><circle cx="886.300" cy="749.500" r="1.400"/><circle cx="886.300" cy="755.800" r="1.400"/><circle cx="886.300" cy="762" r="1.400"/></g>
  <!-- settings -->
  <path d="M937.800 747.800h9l4.500 7.800-4.500 7.800h-9l-4.500-7.800z"/><circle cx="942.300" cy="755.600" r="3"/>
  <!-- volume -->
  <path d="M981 752.500h3.500l5-4.500v15.500l-5-4.500h-3.500z"/><path d="M993 751.800q2.500 3.800 0 7.600M996.300 748.800q4.800 6.800 0 13.600"/>
  <!-- fullscreen -->
  <path d="M1026 752.500v-2.500q0-1.500 1.500-1.500h2.500M1038 748.500h2.500q1.500 0 1.500 1.500v2.500M1042 759.500v2.500q0 1.500-1.500 1.500h-2.500M1030 763.500h-2.500q-1.500 0-1.500-1.500v-2.500"/>
</svg>
</body>
</html>
